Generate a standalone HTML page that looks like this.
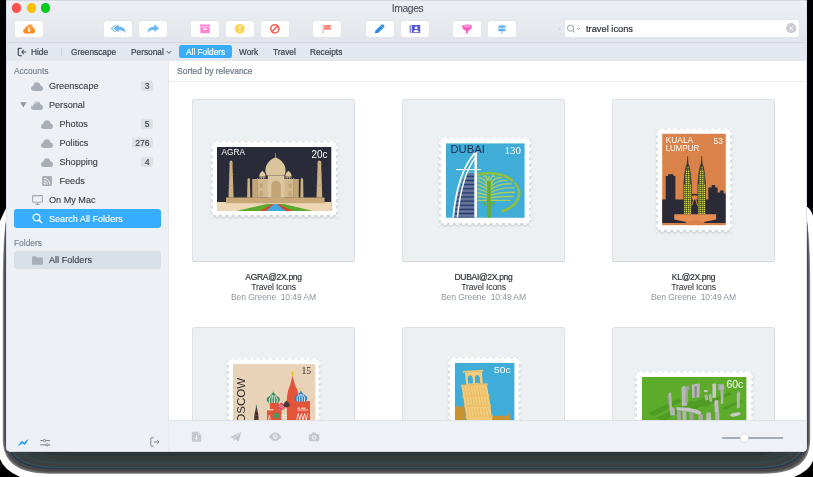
<!DOCTYPE html>
<html>
<head>
<meta charset="utf-8">
<title>Images</title>
<style>
*{box-sizing:border-box;margin:0;padding:0}
html,body{width:813px;height:477px;overflow:hidden;background:#fff}
body{font-family:"Liberation Sans",sans-serif;font-size:9.5px;color:#3f464f;position:relative}
.abs{position:absolute}
#bgsvg{position:absolute;left:0;top:0;width:813px;height:477px}
#win{position:absolute;left:6px;top:0;width:801px;height:452px;background:#fff;border-radius:1.5px 1.5px 5px 5px;overflow:hidden}
#titlebar{position:absolute;left:0;top:0;width:801px;height:43px;background:linear-gradient(#eceff3,#e2e6ec);border-bottom:1px solid #d3d8e0}
#title{position:absolute;left:.8px;width:801px;top:2.6px;height:12px;line-height:12px;text-align:center;font-size:10.3px;letter-spacing:-.35px;color:#4a4f5a;-webkit-text-stroke:.1px #4a4f5a}
.tl{position:absolute;top:3.4px;width:9.2px;height:9.2px;border-radius:50%}
.tb{position:absolute;top:20.6px;width:28.1px;height:16.2px;background:#fff;border-radius:3px;box-shadow:0 0 0 .5px #e1e5ea}
.tb svg{position:absolute;left:0;top:.2px;width:28.1px;height:15.8px}
#search{position:absolute;left:558.5px;top:20.4px;width:234px;height:16.2px;background:#fff;border-radius:3px;box-shadow:0 0 0 .5px #e1e5ea}
#tabbar{position:absolute;left:0;top:42.5px;width:801px;height:18.5px;background:#e3e8ef}
.tab{position:absolute;top:.5px;height:18px;line-height:18px;font-size:8.3px;color:#3c424b;white-space:nowrap;-webkit-text-stroke:.2px currentColor}
#sidebar{position:absolute;left:0;top:61px;width:163px;height:391px;background:#edf0f4;border-right:1px solid #e5e8ed}
#content{position:absolute;left:163px;top:61px;width:638px;height:391px;background:#fff}
.sh{position:absolute;left:8px;font-size:8.4px;color:#7a8592;-webkit-text-stroke:.15px #7a8592}
.row{position:absolute;left:8px;width:147.3px;height:18px;line-height:18px;font-size:9.1px;color:#3a4048;border-radius:3px;-webkit-text-stroke:.12px currentColor}
.row span.t{position:absolute;top:0}
.badge{position:absolute;right:8.3px;top:4.2px;height:10.2px;line-height:10.4px;padding:0 3.4px;background:#dde2e9;border-radius:2px;font-size:8.6px;color:#3f464f;min-width:11.6px;text-align:center;-webkit-text-stroke:.15px currentColor}
.thumb{position:absolute;width:163px;height:163px;background:#ecf0f3;border:1px solid #dde1e7;border-bottom-color:#d3d7dd;border-radius:2.5px}
.cap{position:absolute;width:163px;text-align:center;white-space:nowrap}
.cap div{height:9.85px;line-height:9.85px}
.cap .n{font-size:8.5px;letter-spacing:-.3px;color:#2e3238;-webkit-text-stroke:.2px #2e3238}
.cap .m{font-size:8.6px;letter-spacing:-.15px;color:#3c4148;-webkit-text-stroke:.1px #3c4148}
.cap .g{font-size:8.6px;letter-spacing:-.12px;color:#8f97a1}
#bottombar{position:absolute;left:0;top:359.3px;width:638px;height:32px;background:#eef1f5;border-top:1px solid #dfe4ea}
.tab,.row,.sh,.cap,#title,.hdr,.stxt,#content>svg{will-change:transform}
</style>
</head>
<body>
<svg id="bgsvg" viewBox="0 0 813 477">
  <defs>
    <linearGradient id="shg" x1="0" y1="0" x2="0" y2="1">
      <stop offset="0" stop-color="#2f383b"/>
      <stop offset="0.45" stop-color="#3d4446"/>
      <stop offset="0.75" stop-color="#474a4c"/>
      <stop offset="0.9" stop-color="#5a5c5d"/>
      <stop offset="1" stop-color="#8a8a8a"/>
    </linearGradient>
  </defs>
  <!-- black outer areas -->
  <path d="M0 0H9V4H7V206L0 221Z" fill="#000"/>
  <path d="M813 0H804V4H806V206Q811 209 813 216Z" fill="#000"/>
  <path d="M0 459Q4 470 20 477H0Z" fill="#000"/>
  <path d="M813 461Q809 471 794 477H813Z" fill="#000"/>
  <!--SH0-->
  <path d="M6.5 217Q2.80 240 2.80 285V440.0C3.20 456.0 10.0 473.8 50.0 473.8H763.0C803.0 473.8 809.80 456.0 810.20 440.0V285Q810.20 240 806.5 217Z" fill="#909090"/>
  <path d="M6.5 217Q3.34 240 3.34 285V439.7C3.74 455.4 10.4 473.2 50.7 473.2H762.3C802.6 473.2 809.26 455.4 809.66 439.7V285Q809.66 240 806.5 217Z" fill="#6e6e6e"/>
  <path d="M6.5 217Q4.06 240 4.06 285V439.3C4.46 454.6 10.8 472.4 51.7 472.4H761.3C802.2 472.4 808.54 454.6 808.94 439.3V285Q808.94 240 806.5 217Z" fill="#585858"/>
  <path d="M6.5 217Q4.87 240 4.87 285V438.9C5.27 453.7 11.4 471.5 52.8 471.5H760.2C801.6 471.5 807.73 453.7 808.13 438.9V285Q808.13 240 806.5 217Z" fill="#484848"/>
  <path d="M6.5 217Q6.85 240 6.85 285V437.8C7.25 451.5 12.7 469.3 55.4 469.3H757.6C800.3 469.3 805.75 451.5 806.15 437.8V285Q806.15 240 806.5 217Z" fill="#2d3550"/>
  <path d="M6.5 217Q7.93 240 7.93 285V437.1C8.33 450.3 13.4 468.1 56.8 468.1H756.2C799.6 468.1 804.67 450.3 805.07 437.1V285Q805.07 240 806.5 217Z" fill="#315457"/>
  <path d="M6.5 217Q9.01 240 9.01 285V436.6C9.41 449.1 14.1 466.9 58.3 466.9H754.7C798.9 466.9 803.59 449.1 803.99 436.6V285Q803.99 240 806.5 217Z" fill="#3c3e40"/>
  <path d="M6.5 217Q12.07 240 12.07 285V434.9C12.47 445.7 16.2 463.5 62.4 463.5H750.6C796.8 463.5 800.53 445.7 800.93 434.9V285Q800.93 240 806.5 217Z" fill="#2f4a4c"/>
  <path d="M6.5 217Q13.15 240 13.15 285V434.2C13.55 444.5 16.9 462.3 63.8 462.3H749.2C796.1 462.3 799.45 444.5 799.85 434.2V285Q799.85 240 806.5 217Z" fill="#3a3f41"/>
  <path d="M6.5 217Q14.05 240 14.05 285V433.8C14.45 443.5 17.5 461.3 65.0 461.3H748.0C795.5 461.3 798.55 443.5 798.95 433.8V285Q798.95 240 806.5 217Z" fill="#33403f"/>
  <path d="M6.5 217Q16.12 240 16.12 285V432.6C16.52 441.2 18.9 459.0 67.8 459.0H745.2C794.1 459.0 796.48 441.2 796.88 432.6V285Q796.88 240 806.5 217Z" fill="#363c3e"/>
  <path d="M6.5 217Q18.82 240 18.82 285V431.1C19.22 438.2 20.7 456.0 71.4 456.0H741.6C792.3 456.0 793.78 438.2 794.18 431.1V285Q794.18 240 806.5 217Z" fill="#2e3538"/>
  <!--SH1-->
</svg>
<div id="win">
  <div id="titlebar">
    <div class="tl" style="left:6.2px;background:#ff4f4f"></div>
    <div class="tl" style="left:20.7px;background:#ffbc00"></div>
    <div class="tl" style="left:35.3px;background:#00cc1e"></div>
    <div id="title">Images</div>
    <div class="tb" style="left:8.7px"><svg viewBox="0 0 28.1 15.8"><defs><linearGradient id="og" x1="0" y1="0" x2="0" y2="1"><stop offset="0" stop-color="#ffa347"/><stop offset="1" stop-color="#ff8410"/></linearGradient></defs><path d="M10.6 12.6Q8.1 12.6 8.1 10.1Q8.1 8 10 7.6Q10 5.2 12.2 5.2Q12.8 3.2 15 3.2Q17.6 3.2 17.9 6.4Q20.1 6.8 20.1 9.6Q20.1 12.6 17.4 12.6Z" fill="url(#og)"/><path d="M13.4 6.6H14.8V9.2H16L14.1 11.3L12.2 9.2H13.4Z" fill="#fff"/></svg></div>
    <div class="tb" style="left:97.8px"><svg viewBox="0 0 28.1 15.8"><path d="M11.6 3.4L6.5 7.4L11.6 11.4V10.2L8.1 7.4L11.6 4.7Z" fill="#7cc0f7"/><path d="M14.6 3.3L9.4 7.4L14.6 11.5V9.2Q19.4 8.8 21.8 12.2Q21.3 5.9 14.6 5.6Z" fill="#6db7f5"/></svg></div>
    <div class="tb" style="left:132.6px"><svg viewBox="0 0 28.1 15.8"><path d="M15.4 3.3L20 7.3L15.4 11.3V9Q10.6 8.8 8.2 12.2Q8.7 5.9 15.4 5.6Z" fill="#6db7f5"/></svg></div>
    <div class="tb" style="left:185.2px"><svg viewBox="0 0 28.1 15.8"><rect x="8.8" y="3.4" width="10.4" height="2.2" rx="0.3" fill="#ff7fd2"/><path d="M9.4 6.2H18.6V11.6Q18.6 12.2 18 12.2H10Q9.4 12.2 9.4 11.6Z" fill="#ff7fd2"/><rect x="12.3" y="7.6" width="3.4" height="1.3" rx="0.5" fill="#fff"/></svg></div>
    <div class="tb" style="left:220.1px"><svg viewBox="0 0 28.1 15.8"><circle cx="13.8" cy="7.8" r="4.9" fill="#ffd451"/><rect x="13.15" y="4.8" width="1.3" height="3.8" rx="0.4" fill="#fff"/><circle cx="13.8" cy="10.2" r="0.8" fill="#fff"/></svg></div>
    <div class="tb" style="left:255px"><svg viewBox="0 0 28.1 15.8"><circle cx="13.8" cy="7.8" r="4.1" fill="none" stroke="#ff5b4c" stroke-width="1.5"/><path d="M16.6 5L11 10.6" stroke="#ff5b4c" stroke-width="1.5"/></svg></div>
    <div class="tb" style="left:307px"><svg viewBox="0 0 28.1 15.8"><rect x="9.7" y="3.5" width="0.9" height="9" fill="#ff9488"/><path d="M11.2 3.9H18.6L17 6.3L18.6 8.7H11.2Z" fill="#ff8577"/></svg></div>
    <div class="tb" style="left:360px"><svg viewBox="0 0 28.1 15.8"><path d="M8.8 12.3L9.5 9.5L15.6 3.6Q16.4 2.9 17.3 3.7L18.1 4.5Q18.9 5.4 18.1 6.2L12 12Z" fill="#2a8de8"/><path d="M14.9 4.6L17.1 6.8" stroke="#fff" stroke-width="0.5"/></svg></div>
    <div class="tb" style="left:394.6px"><svg viewBox="0 0 28.1 15.8"><rect x="8.5" y="4" width="1.9" height="8" fill="#8f92ee"/><rect x="11" y="4" width="8.2" height="8" rx="0.4" fill="#5458dc"/><circle cx="15.1" cy="6.9" r="1.4" fill="#fff"/><path d="M12.5 11.2Q12.5 8.9 15.1 8.9Q17.7 8.9 17.7 11.2Z" fill="#fff"/></svg></div>
    <div class="tb" style="left:446.8px"><svg viewBox="0 0 28.1 15.8"><path d="M9.2 5.4Q9.2 3.5 14 3.5Q18.8 3.5 18.8 5.4Q18.8 8.2 15.1 9.7L14.9 12L14 13L13.1 12L12.9 9.7Q9.2 8.2 9.2 5.4Z" fill="#ff5cc2"/><ellipse cx="14" cy="5.2" rx="3.5" ry="1" fill="#ffa8de"/></svg></div>
    <div class="tb" style="left:481.9px"><svg viewBox="0 0 28.1 15.8"><rect x="13.45" y="3.5" width="0.9" height="9.3" fill="#5fb4f5"/><path d="M10.4 4.4H17L18.1 5.6L17 6.8H10.4Z" fill="#5fb4f5"/><path d="M17.4 7.8H10.8L9.7 9L10.8 10.2H17.4Z" fill="#5fb4f5"/></svg></div>
    <div id="search">
      <svg class="abs" style="left:2.5px;top:3.4px" width="17" height="10" viewBox="0 0 17 10"><circle cx="3.5" cy="4.2" r="3.05" fill="none" stroke="#979da6" stroke-width="0.95"/><path d="M5.7 6.5L7.6 8.5" stroke="#979da6" stroke-width="1.05"/><path d="M10 3.9L11.5 5.4L13 3.9" fill="none" stroke="#7b828c" stroke-width="0.85"/></svg>
      <div class="stxt abs" style="left:21px;top:2.5px;font-size:9.3px;line-height:12px;color:#2b2f36;-webkit-text-stroke:.2px #2b2f36;white-space:nowrap">travel icons</div>
      <svg class="abs" style="left:221.3px;top:2.9px" width="10.4" height="10.4" viewBox="0 0 10 10"><circle cx="5" cy="5" r="4.9" fill="#cacdd1"/><path d="M3.2 3.2L6.8 6.8M6.8 3.2L3.2 6.8" stroke="#fff" stroke-width="0.85"/></svg>
    </div>
    <div class="abs" style="left:552.6px;top:27.8px;width:2px;height:2px;border-radius:50%;background:#cfd4db"></div>
  </div>
  <div id="tabbar">
    <svg class="abs" style="left:11px;top:4px" width="10" height="10" viewBox="0 0 10 10"><path d="M4.7 1.3H2.4Q1.3 1.3 1.3 2.4V7.6Q1.3 8.7 2.4 8.7H4.7" fill="none" stroke="#4d5561" stroke-width="1.3"/><path d="M9.3 5H4.9" fill="none" stroke="#4d5561" stroke-width="1.1"/><path d="M6.9 2.9L4.8 5L6.9 7.1" fill="none" stroke="#4d5561" stroke-width="1.1"/></svg>
    <div class="tab" style="left:24.7px">Hide</div>
    <div class="abs" style="left:55px;top:5.5px;width:1px;height:8px;background:#cdd3db"></div>
    <div class="tab" style="left:65.3px">Greenscape</div>
    <div class="tab" style="left:124.6px">Personal</div>
    <svg class="abs" style="left:160px;top:7px" width="6" height="5" viewBox="0 0 6 5"><path d="M0.8 1L3 3.4L5.2 1" fill="none" stroke="#555c66" stroke-width="1"/></svg>
    <div class="abs" style="left:173.2px;top:2.3px;width:52.6px;height:13px;border-radius:2.5px;background:#38acff"></div>
    <div class="tab" style="left:179.8px;color:#fff">All Folders</div>
    <div class="tab" style="left:233.2px">Work</div>
    <div class="tab" style="left:267.2px">Travel</div>
    <div class="tab" style="left:304px">Receipts</div>
  </div>
  <div id="sidebar">
    <div class="sh" style="top:5px">Accounts</div>
    <div class="row" style="top:16.3px;"><svg class="abs" style="left:17px;top:4.6px" width="12" height="9" viewBox="0 0 12 9"><path d="M3 9Q0 9 0 6.3Q0 4 2.3 3.7Q2.6 0.2 6 0.2Q8.8 0.2 9.4 3.2Q12 3.6 12 6.2Q12 9 9.2 9Z" fill="#a9afb9"/></svg><span class="t" style="left:35px">Greenscape</span><span class="badge">3</span></div>
    <div class="row" style="top:35.1px;"><svg class="abs" style="left:6px;top:6.3px" width="7" height="6" viewBox="0 0 7 6"><path d="M0.3 0.3H6.5L3.4 5.6Z" fill="#8f969f"/></svg><svg class="abs" style="left:17px;top:4.6px" width="12" height="9" viewBox="0 0 12 9"><path d="M3 9Q0 9 0 6.3Q0 4 2.3 3.7Q2.6 0.2 6 0.2Q8.8 0.2 9.4 3.2Q12 3.6 12 6.2Q12 9 9.2 9Z" fill="#a9afb9"/><path d="M1.2 5.6Q2.2 1.6 7.4 0.9" fill="none" stroke="#eef1f5" stroke-width="0.9"/></svg><span class="t" style="left:35px">Personal</span></div>
    <div class="row" style="top:54px;"><svg class="abs" style="left:27.3px;top:4.6px" width="12" height="9" viewBox="0 0 12 9"><path d="M3 9Q0 9 0 6.3Q0 4 2.3 3.7Q2.6 0.2 6 0.2Q8.8 0.2 9.4 3.2Q12 3.6 12 6.2Q12 9 9.2 9Z" fill="#a9afb9"/></svg><span class="t" style="left:45.5px">Photos</span><span class="badge">5</span></div>
    <div class="row" style="top:72.8px;"><svg class="abs" style="left:27.3px;top:4.6px" width="12" height="9" viewBox="0 0 12 9"><path d="M3 9Q0 9 0 6.3Q0 4 2.3 3.7Q2.6 0.2 6 0.2Q8.8 0.2 9.4 3.2Q12 3.6 12 6.2Q12 9 9.2 9Z" fill="#a9afb9"/></svg><span class="t" style="left:45.5px">Politics</span><span class="badge">276</span></div>
    <div class="row" style="top:91.7px;"><svg class="abs" style="left:27.3px;top:4.6px" width="12" height="9" viewBox="0 0 12 9"><path d="M3 9Q0 9 0 6.3Q0 4 2.3 3.7Q2.6 0.2 6 0.2Q8.8 0.2 9.4 3.2Q12 3.6 12 6.2Q12 9 9.2 9Z" fill="#a9afb9"/></svg><span class="t" style="left:45.5px">Shopping</span><span class="badge">4</span></div>
    <div class="row" style="top:110.6px;"><svg class="abs" style="left:28px;top:4px" width="10" height="10" viewBox="0 0 9 9"><rect width="9" height="9" rx="1.2" fill="#a9afb9"/><circle cx="2.4" cy="6.7" r="0.9" fill="#eef1f5"/><path d="M1.6 4.2A3.3 3.3 0 0 1 4.9 7.5M1.6 2A5.5 5.5 0 0 1 7.1 7.5" fill="none" stroke="#eef1f5" stroke-width="0.9"/></svg><span class="t" style="left:45.5px">Feeds</span></div>
    <div class="row" style="top:129.5px;"><svg class="abs" style="left:17.5px;top:4px" width="11" height="10" viewBox="0 0 11 10"><rect x="0.6" y="0.6" width="9.8" height="6.6" rx="0.8" fill="none" stroke="#a2a9b3" stroke-width="1.1"/><path d="M3.3 9.4H7.7M5.5 7.3V9.2" stroke="#a2a9b3" stroke-width="1.1"/></svg><span class="t" style="left:35px">On My Mac</span></div>
    <div class="row" style="top:148.4px;background:#38acff;color:#fff;height:19px;line-height:20.2px;top:148px"><svg class="abs" style="left:17.5px;top:4px" width="11" height="11" viewBox="0 0 11 11"><circle cx="4.5" cy="4.5" r="3.4" fill="none" stroke="#fff" stroke-width="1.3"/><path d="M7 7L9.8 9.8" stroke="#fff" stroke-width="1.4" stroke-linecap="round"/></svg><span class="t" style="left:35px">Search All Folders</span></div>
    <div class="sh" style="top:176.5px">Folders</div>
    <div class="row" style="top:190px;background:#d9dfe8"><svg class="abs" style="left:17.5px;top:4.8px" width="11" height="9" viewBox="0 0 11 9"><path d="M0 1Q0 0.2 0.8 0.2H3.6L4.8 1.4H10.2Q11 1.4 11 2.2V8Q11 8.8 10.2 8.8H0.8Q0 8.8 0 8Z" fill="#a9afb9"/></svg><span class="t" style="left:35px">All Folders</span></div>
    <svg class="abs" style="left:12.4px;top:377.6px" width="11" height="8" viewBox="0 0 11 8"><path d="M0.6 6.3L3.9 2.3L6.2 4L9.6 0.9L6.8 5.6L4.5 3.9Z" fill="#2f9fff" stroke="#2f9fff" stroke-width="1" stroke-linejoin="round"/></svg>
    <svg class="abs" style="left:33.9px;top:376.7px" width="11" height="9" viewBox="0 0 11 9"><path d="M0.3 2.6H10.1M0.3 6.9H10.1" stroke="#747c86" stroke-width="0.9"/><circle cx="4.4" cy="2.6" r="1.2" fill="#eef1f5" stroke="#747c86" stroke-width="0.8"/><circle cx="7" cy="6.9" r="1.2" fill="#eef1f5" stroke="#747c86" stroke-width="0.8"/></svg>
    <svg class="abs" style="left:143.5px;top:376.2px" width="10" height="10" viewBox="0 0 10 10"><path d="M3.6 0.8H1.8Q0.8 0.8 0.8 1.8V8.2Q0.8 9.2 1.8 9.2H3.6" fill="none" stroke="#7d858f" stroke-width="1"/><path d="M3.8 5H9M7.2 3.2L9 5L7.2 6.8" fill="none" stroke="#7d858f" stroke-width="1"/></svg>
  </div>
  <div id="content">
    <div class="hdr abs" style="left:7.8px;top:5px;font-size:8.5px;color:#6a7787;-webkit-text-stroke:.2px #6a7787;white-space:nowrap">Sorted by relevance</div>
    <div class="abs" style="left:0;top:19.5px;width:638px;height:1px;background:#e9ecf0"></div>
    <div class="thumb" style="left:23.3px;top:38px"></div>
    <div class="thumb" style="left:232.8px;top:38px"></div>
    <div class="thumb" style="left:442.8px;top:38px"></div>
    <div class="thumb" style="left:23.3px;top:266.3px"></div>
    <div class="thumb" style="left:232.8px;top:266.3px"></div>
    <div class="thumb" style="left:442.8px;top:266.3px"></div>
    <div class="cap" style="left:23.3px;top:211.7px"><div class="n">AGRA@2X.png</div><div class="m">Travel Icons</div><div class="g">Ben Greene&nbsp;&nbsp;10:49 AM</div></div>
    <div class="cap" style="left:232.8px;top:211.7px"><div class="n">DUBAI@2X.png</div><div class="m">Travel Icons</div><div class="g">Ben Greene&nbsp;&nbsp;10:49 AM</div></div>
    <div class="cap" style="left:442.8px;top:211.7px"><div class="n">KL@2X.png</div><div class="m">Travel Icons</div><div class="g">Ben Greene&nbsp;&nbsp;10:49 AM</div></div>
    <!--ST0-->
    <svg class="abs" width="0" height="0"><defs><filter id="bl" x="-10%" y="-10%" width="120%" height="130%"><feGaussianBlur stdDeviation="1.2"/></filter></defs></svg>
    <svg class="abs" style="left:38.5px;top:77.4px" width="132.8" height="83.8" viewBox="207.5 138.4 132.8 83.8"><path d="M210.50 142.90H211.57A2.1 2.1 0 0 0 215.77 142.90H217.91A2.1 2.1 0 0 0 222.11 142.90H224.25A2.1 2.1 0 0 0 228.45 142.90H230.59A2.1 2.1 0 0 0 234.79 142.90H236.93A2.1 2.1 0 0 0 241.13 142.90H243.27A2.1 2.1 0 0 0 247.47 142.90H249.61A2.1 2.1 0 0 0 253.81 142.90H255.95A2.1 2.1 0 0 0 260.15 142.90H262.29A2.1 2.1 0 0 0 266.49 142.90H268.63A2.1 2.1 0 0 0 272.83 142.90H274.97A2.1 2.1 0 0 0 279.17 142.90H281.31A2.1 2.1 0 0 0 285.51 142.90H287.65A2.1 2.1 0 0 0 291.85 142.90H293.99A2.1 2.1 0 0 0 298.19 142.90H300.33A2.1 2.1 0 0 0 304.53 142.90H306.67A2.1 2.1 0 0 0 310.87 142.90H313.01A2.1 2.1 0 0 0 317.21 142.90H319.35A2.1 2.1 0 0 0 323.55 142.90H325.69A2.1 2.1 0 0 0 329.89 142.90H332.03A2.1 2.1 0 0 0 336.23 142.90H337.30V143.96A2.1 2.1 0 0 0 337.30 148.16V150.28A2.1 2.1 0 0 0 337.30 154.47V156.59A2.1 2.1 0 0 0 337.30 160.79V162.91A2.1 2.1 0 0 0 337.30 167.11V169.22A2.1 2.1 0 0 0 337.30 173.42V175.54A2.1 2.1 0 0 0 337.30 179.74V181.86A2.1 2.1 0 0 0 337.30 186.06V188.18A2.1 2.1 0 0 0 337.30 192.38V194.49A2.1 2.1 0 0 0 337.30 198.69V200.81A2.1 2.1 0 0 0 337.30 205.01V207.12A2.1 2.1 0 0 0 337.30 211.32V213.44A2.1 2.1 0 0 0 337.30 217.64V218.70H336.23A2.1 2.1 0 0 0 332.03 218.70H329.89A2.1 2.1 0 0 0 325.69 218.70H323.55A2.1 2.1 0 0 0 319.35 218.70H317.21A2.1 2.1 0 0 0 313.01 218.70H310.87A2.1 2.1 0 0 0 306.67 218.70H304.53A2.1 2.1 0 0 0 300.33 218.70H298.19A2.1 2.1 0 0 0 293.99 218.70H291.85A2.1 2.1 0 0 0 287.65 218.70H285.51A2.1 2.1 0 0 0 281.31 218.70H279.17A2.1 2.1 0 0 0 274.97 218.70H272.83A2.1 2.1 0 0 0 268.63 218.70H266.49A2.1 2.1 0 0 0 262.29 218.70H260.15A2.1 2.1 0 0 0 255.95 218.70H253.81A2.1 2.1 0 0 0 249.61 218.70H247.47A2.1 2.1 0 0 0 243.27 218.70H241.13A2.1 2.1 0 0 0 236.93 218.70H234.79A2.1 2.1 0 0 0 230.59 218.70H228.45A2.1 2.1 0 0 0 224.25 218.70H222.11A2.1 2.1 0 0 0 217.91 218.70H215.77A2.1 2.1 0 0 0 211.57 218.70H210.50V217.64A2.1 2.1 0 0 0 210.50 213.44V211.32A2.1 2.1 0 0 0 210.50 207.12V205.01A2.1 2.1 0 0 0 210.50 200.81V198.69A2.1 2.1 0 0 0 210.50 194.49V192.38A2.1 2.1 0 0 0 210.50 188.18V186.06A2.1 2.1 0 0 0 210.50 181.86V179.74A2.1 2.1 0 0 0 210.50 175.54V173.42A2.1 2.1 0 0 0 210.50 169.22V167.11A2.1 2.1 0 0 0 210.50 162.91V160.79A2.1 2.1 0 0 0 210.50 156.59V154.47A2.1 2.1 0 0 0 210.50 150.28V148.16A2.1 2.1 0 0 0 210.50 143.96Z" fill="#bfc5cd" opacity="0.85" filter="url(#bl)"/><path d="M210.50 141.40H211.57A2.1 2.1 0 0 0 215.77 141.40H217.91A2.1 2.1 0 0 0 222.11 141.40H224.25A2.1 2.1 0 0 0 228.45 141.40H230.59A2.1 2.1 0 0 0 234.79 141.40H236.93A2.1 2.1 0 0 0 241.13 141.40H243.27A2.1 2.1 0 0 0 247.47 141.40H249.61A2.1 2.1 0 0 0 253.81 141.40H255.95A2.1 2.1 0 0 0 260.15 141.40H262.29A2.1 2.1 0 0 0 266.49 141.40H268.63A2.1 2.1 0 0 0 272.83 141.40H274.97A2.1 2.1 0 0 0 279.17 141.40H281.31A2.1 2.1 0 0 0 285.51 141.40H287.65A2.1 2.1 0 0 0 291.85 141.40H293.99A2.1 2.1 0 0 0 298.19 141.40H300.33A2.1 2.1 0 0 0 304.53 141.40H306.67A2.1 2.1 0 0 0 310.87 141.40H313.01A2.1 2.1 0 0 0 317.21 141.40H319.35A2.1 2.1 0 0 0 323.55 141.40H325.69A2.1 2.1 0 0 0 329.89 141.40H332.03A2.1 2.1 0 0 0 336.23 141.40H337.30V142.46A2.1 2.1 0 0 0 337.30 146.66V148.78A2.1 2.1 0 0 0 337.30 152.97V155.09A2.1 2.1 0 0 0 337.30 159.29V161.41A2.1 2.1 0 0 0 337.30 165.61V167.72A2.1 2.1 0 0 0 337.30 171.92V174.04A2.1 2.1 0 0 0 337.30 178.24V180.36A2.1 2.1 0 0 0 337.30 184.56V186.68A2.1 2.1 0 0 0 337.30 190.88V192.99A2.1 2.1 0 0 0 337.30 197.19V199.31A2.1 2.1 0 0 0 337.30 203.51V205.62A2.1 2.1 0 0 0 337.30 209.82V211.94A2.1 2.1 0 0 0 337.30 216.14V217.20H336.23A2.1 2.1 0 0 0 332.03 217.20H329.89A2.1 2.1 0 0 0 325.69 217.20H323.55A2.1 2.1 0 0 0 319.35 217.20H317.21A2.1 2.1 0 0 0 313.01 217.20H310.87A2.1 2.1 0 0 0 306.67 217.20H304.53A2.1 2.1 0 0 0 300.33 217.20H298.19A2.1 2.1 0 0 0 293.99 217.20H291.85A2.1 2.1 0 0 0 287.65 217.20H285.51A2.1 2.1 0 0 0 281.31 217.20H279.17A2.1 2.1 0 0 0 274.97 217.20H272.83A2.1 2.1 0 0 0 268.63 217.20H266.49A2.1 2.1 0 0 0 262.29 217.20H260.15A2.1 2.1 0 0 0 255.95 217.20H253.81A2.1 2.1 0 0 0 249.61 217.20H247.47A2.1 2.1 0 0 0 243.27 217.20H241.13A2.1 2.1 0 0 0 236.93 217.20H234.79A2.1 2.1 0 0 0 230.59 217.20H228.45A2.1 2.1 0 0 0 224.25 217.20H222.11A2.1 2.1 0 0 0 217.91 217.20H215.77A2.1 2.1 0 0 0 211.57 217.20H210.50V216.14A2.1 2.1 0 0 0 210.50 211.94V209.82A2.1 2.1 0 0 0 210.50 205.62V203.51A2.1 2.1 0 0 0 210.50 199.31V197.19A2.1 2.1 0 0 0 210.50 192.99V190.88A2.1 2.1 0 0 0 210.50 186.68V184.56A2.1 2.1 0 0 0 210.50 180.36V178.24A2.1 2.1 0 0 0 210.50 174.04V171.92A2.1 2.1 0 0 0 210.50 167.72V165.61A2.1 2.1 0 0 0 210.50 161.41V159.29A2.1 2.1 0 0 0 210.50 155.09V152.97A2.1 2.1 0 0 0 210.50 148.78V146.66A2.1 2.1 0 0 0 210.50 142.46Z" fill="#fff"/><svg x="216.5" y="147.4" width="114.3" height="64.0" viewBox="0 0 114.3 64.0"><rect width="115" height="65" fill="#2a2b38"/><rect y="55" width="115" height="10" fill="#ecd6b4"/><path d="M19.3 64L50 57H67L96 64Z" fill="#5cab2f"/><path d="M42.7 64L55.5 57H61.5L76 64Z" fill="#d44a2a"/><path d="M49 64L57 57H60L68.5 64Z" fill="#3fa9e0"/><rect x="9" y="50.5" width="98.6" height="5.7" fill="#c9a877"/><path d="M12.7 14.5Q14 12.4 15.4 14.5L16.6 50.5H11.5Z" fill="#cdb083"/><path d="M100.7 14.5Q102.4 12.4 104.1 14.5L105.3 50.5H99.5Z" fill="#cdb083"/><rect x="11.9" y="16.5" width="4.3" height="0.8" fill="#b89a6c"/><rect x="99.9" y="16.5" width="5" height="0.8" fill="#b89a6c"/><rect x="11.7" y="27" width="4.7" height="0.8" fill="#b89a6c"/><rect x="99.7" y="27" width="5.4" height="0.8" fill="#b89a6c"/><rect x="11.5" y="38" width="5.1" height="0.8" fill="#b89a6c"/><rect x="99.5" y="38" width="5.8" height="0.8" fill="#b89a6c"/><path d="M30.5 32Q31.7 29.8 32.9 32L33.3 50.5H30.1Z" fill="#cdb083"/><path d="M83.7 32Q84.9 29.8 86.1 32L86.5 50.5H83.3Z" fill="#cdb083"/><rect x="35.5" y="32" width="46" height="18.5" fill="#d2b88e"/><rect x="35.5" y="32" width="4.5" height="18.5" fill="#c4a676"/><rect x="77" y="32" width="4.5" height="18.5" fill="#c4a676"/><rect x="40" y="31" width="0.9" height="19.5" fill="#b89a6c"/><rect x="76.1" y="31" width="0.9" height="19.5" fill="#b89a6c"/><rect x="50.8" y="28.6" width="16.6" height="21.9" fill="#dcc7a0"/><path d="M54.3 50.5V38.5Q54.3 34.6 59.1 33.6Q63.9 34.6 63.9 38.5V50.5Z" fill="#c4a676"/><path d="M42.6 41V37.8Q42.6 36.5 44.2 36.2Q45.8 36.5 45.8 37.8V41ZM42.6 49.5V45.3Q42.6 44 44.2 43.7Q45.8 44 45.8 45.3V49.5ZM71.4 41V37.8Q71.4 36.5 73 36.2Q74.6 36.5 74.6 37.8V41ZM71.4 49.5V45.3Q71.4 44 73 43.7Q74.6 44 74.6 45.3V49.5Z" fill="#c4a676"/><path d="M49.8 28.6Q47.2 24 49.4 18.5Q52.2 12.6 58.5 10.2Q64.8 12.6 67.6 18.5Q69.8 24 67.2 28.6Z" fill="#d9c49c"/><rect x="58.1" y="6.3" width="0.8" height="4.4" fill="#b89a6c"/><path d="M42.4 29.4Q41.8 26.6 45.4 23.8Q49 26.6 48.4 29.4Z" fill="#dcc7a0"/><path d="M68.4 29.4Q67.8 26.6 71.4 23.8Q75 26.6 74.4 29.4Z" fill="#dcc7a0"/><rect x="42.4" y="29.4" width="6" height="2.6" fill="#c4a676"/><rect x="68.4" y="29.4" width="6" height="2.6" fill="#c4a676"/><path d="M43.2 32V30.4H44.2V32ZM45 32V30.4H46V32ZM46.8 32V30.4H47.8V32ZM69.2 32V30.4H70.2V32ZM71 32V30.4H72V32ZM72.8 32V30.4H73.8V32Z" fill="#2a2b38"/><text x="4.6" y="8" font-family="Liberation Sans, sans-serif" font-size="8.4" fill="#fff" textLength="23.3" lengthAdjust="spacingAndGlyphs">AGRA</text><text x="94.6" y="10.6" font-family="Liberation Sans, sans-serif" font-size="10" fill="#fff" textLength="16" lengthAdjust="spacingAndGlyphs">20c</text></svg></svg>
    <svg class="abs" style="left:266.5px;top:72.5px" width="98.1" height="96.0" viewBox="435.5 133.5 98.1 96.0"><path d="M438.50 138.00H439.47A2.1 2.1 0 0 0 443.67 138.00H445.61A2.1 2.1 0 0 0 449.81 138.00H451.75A2.1 2.1 0 0 0 455.95 138.00H457.89A2.1 2.1 0 0 0 462.09 138.00H464.03A2.1 2.1 0 0 0 468.23 138.00H470.17A2.1 2.1 0 0 0 474.37 138.00H476.31A2.1 2.1 0 0 0 480.51 138.00H482.45A2.1 2.1 0 0 0 486.65 138.00H488.59A2.1 2.1 0 0 0 492.79 138.00H494.73A2.1 2.1 0 0 0 498.93 138.00H500.87A2.1 2.1 0 0 0 505.07 138.00H507.01A2.1 2.1 0 0 0 511.21 138.00H513.15A2.1 2.1 0 0 0 517.35 138.00H519.29A2.1 2.1 0 0 0 523.49 138.00H525.43A2.1 2.1 0 0 0 529.63 138.00H530.60V139.04A2.1 2.1 0 0 0 530.60 143.24V145.33A2.1 2.1 0 0 0 530.60 149.53V151.61A2.1 2.1 0 0 0 530.60 155.81V157.90A2.1 2.1 0 0 0 530.60 162.10V164.19A2.1 2.1 0 0 0 530.60 168.39V170.47A2.1 2.1 0 0 0 530.60 174.67V176.76A2.1 2.1 0 0 0 530.60 180.96V183.04A2.1 2.1 0 0 0 530.60 187.24V189.33A2.1 2.1 0 0 0 530.60 193.53V195.61A2.1 2.1 0 0 0 530.60 199.81V201.90A2.1 2.1 0 0 0 530.60 206.10V208.19A2.1 2.1 0 0 0 530.60 212.39V214.47A2.1 2.1 0 0 0 530.60 218.67V220.76A2.1 2.1 0 0 0 530.60 224.96V226.00H529.63A2.1 2.1 0 0 0 525.43 226.00H523.49A2.1 2.1 0 0 0 519.29 226.00H517.35A2.1 2.1 0 0 0 513.15 226.00H511.21A2.1 2.1 0 0 0 507.01 226.00H505.07A2.1 2.1 0 0 0 500.87 226.00H498.93A2.1 2.1 0 0 0 494.73 226.00H492.79A2.1 2.1 0 0 0 488.59 226.00H486.65A2.1 2.1 0 0 0 482.45 226.00H480.51A2.1 2.1 0 0 0 476.31 226.00H474.37A2.1 2.1 0 0 0 470.17 226.00H468.23A2.1 2.1 0 0 0 464.03 226.00H462.09A2.1 2.1 0 0 0 457.89 226.00H455.95A2.1 2.1 0 0 0 451.75 226.00H449.81A2.1 2.1 0 0 0 445.61 226.00H443.67A2.1 2.1 0 0 0 439.47 226.00H438.50V224.96A2.1 2.1 0 0 0 438.50 220.76V218.67A2.1 2.1 0 0 0 438.50 214.47V212.39A2.1 2.1 0 0 0 438.50 208.19V206.10A2.1 2.1 0 0 0 438.50 201.90V199.81A2.1 2.1 0 0 0 438.50 195.61V193.53A2.1 2.1 0 0 0 438.50 189.33V187.24A2.1 2.1 0 0 0 438.50 183.04V180.96A2.1 2.1 0 0 0 438.50 176.76V174.67A2.1 2.1 0 0 0 438.50 170.47V168.39A2.1 2.1 0 0 0 438.50 164.19V162.10A2.1 2.1 0 0 0 438.50 157.90V155.81A2.1 2.1 0 0 0 438.50 151.61V149.53A2.1 2.1 0 0 0 438.50 145.33V143.24A2.1 2.1 0 0 0 438.50 139.04Z" fill="#bfc5cd" opacity="0.85" filter="url(#bl)"/><path d="M438.50 136.50H439.47A2.1 2.1 0 0 0 443.67 136.50H445.61A2.1 2.1 0 0 0 449.81 136.50H451.75A2.1 2.1 0 0 0 455.95 136.50H457.89A2.1 2.1 0 0 0 462.09 136.50H464.03A2.1 2.1 0 0 0 468.23 136.50H470.17A2.1 2.1 0 0 0 474.37 136.50H476.31A2.1 2.1 0 0 0 480.51 136.50H482.45A2.1 2.1 0 0 0 486.65 136.50H488.59A2.1 2.1 0 0 0 492.79 136.50H494.73A2.1 2.1 0 0 0 498.93 136.50H500.87A2.1 2.1 0 0 0 505.07 136.50H507.01A2.1 2.1 0 0 0 511.21 136.50H513.15A2.1 2.1 0 0 0 517.35 136.50H519.29A2.1 2.1 0 0 0 523.49 136.50H525.43A2.1 2.1 0 0 0 529.63 136.50H530.60V137.54A2.1 2.1 0 0 0 530.60 141.74V143.83A2.1 2.1 0 0 0 530.60 148.03V150.11A2.1 2.1 0 0 0 530.60 154.31V156.40A2.1 2.1 0 0 0 530.60 160.60V162.69A2.1 2.1 0 0 0 530.60 166.89V168.97A2.1 2.1 0 0 0 530.60 173.17V175.26A2.1 2.1 0 0 0 530.60 179.46V181.54A2.1 2.1 0 0 0 530.60 185.74V187.83A2.1 2.1 0 0 0 530.60 192.03V194.11A2.1 2.1 0 0 0 530.60 198.31V200.40A2.1 2.1 0 0 0 530.60 204.60V206.69A2.1 2.1 0 0 0 530.60 210.89V212.97A2.1 2.1 0 0 0 530.60 217.17V219.26A2.1 2.1 0 0 0 530.60 223.46V224.50H529.63A2.1 2.1 0 0 0 525.43 224.50H523.49A2.1 2.1 0 0 0 519.29 224.50H517.35A2.1 2.1 0 0 0 513.15 224.50H511.21A2.1 2.1 0 0 0 507.01 224.50H505.07A2.1 2.1 0 0 0 500.87 224.50H498.93A2.1 2.1 0 0 0 494.73 224.50H492.79A2.1 2.1 0 0 0 488.59 224.50H486.65A2.1 2.1 0 0 0 482.45 224.50H480.51A2.1 2.1 0 0 0 476.31 224.50H474.37A2.1 2.1 0 0 0 470.17 224.50H468.23A2.1 2.1 0 0 0 464.03 224.50H462.09A2.1 2.1 0 0 0 457.89 224.50H455.95A2.1 2.1 0 0 0 451.75 224.50H449.81A2.1 2.1 0 0 0 445.61 224.50H443.67A2.1 2.1 0 0 0 439.47 224.50H438.50V223.46A2.1 2.1 0 0 0 438.50 219.26V217.17A2.1 2.1 0 0 0 438.50 212.97V210.89A2.1 2.1 0 0 0 438.50 206.69V204.60A2.1 2.1 0 0 0 438.50 200.40V198.31A2.1 2.1 0 0 0 438.50 194.11V192.03A2.1 2.1 0 0 0 438.50 187.83V185.74A2.1 2.1 0 0 0 438.50 181.54V179.46A2.1 2.1 0 0 0 438.50 175.26V173.17A2.1 2.1 0 0 0 438.50 168.97V166.89A2.1 2.1 0 0 0 438.50 162.69V160.60A2.1 2.1 0 0 0 438.50 156.40V154.31A2.1 2.1 0 0 0 438.50 150.11V148.03A2.1 2.1 0 0 0 438.50 143.83V141.74A2.1 2.1 0 0 0 438.50 137.54Z" fill="#fff"/><svg x="445.3" y="142.7" width="78.8" height="74.6" viewBox="0 0 78.8 74.6"><rect width="80" height="76" fill="#40acd8"/><defs><clipPath id="dcl"><path d="M28.8 29.6H20.6Q11.2 46 7.6 74.6H28.8Z"/></clipPath></defs><path d="M31.6 31.6A30 20 0 0 1 66.5 37.4" fill="none" stroke="#8dc03f" stroke-width="2.7" stroke-linecap="round"/><path d="M69.6 40.3A30 20 0 0 1 56.8 67.9" fill="none" stroke="#8dc03f" stroke-width="2.7" stroke-linecap="round"/><path d="M44.4 39.5Q45.6 31.1 48.5 33.3" fill="none" stroke="#aacf58" stroke-width="1.45" stroke-linecap="round"/><path d="M44.4 42.0Q48.6 33.0 55.2 34.8" fill="none" stroke="#aacf58" stroke-width="1.45" stroke-linecap="round"/><path d="M44.4 44.5Q51.2 35.9 60.9 37.4" fill="none" stroke="#aacf58" stroke-width="1.45" stroke-linecap="round"/><path d="M44.4 47.0Q53.1 39.6 65.3 40.8" fill="none" stroke="#aacf58" stroke-width="1.45" stroke-linecap="round"/><path d="M44.4 49.5Q54.3 44.0 67.9 44.8" fill="none" stroke="#aacf58" stroke-width="1.45" stroke-linecap="round"/><path d="M44.4 52.0Q54.7 48.6 68.7 49.0" fill="none" stroke="#aacf58" stroke-width="1.45" stroke-linecap="round"/><path d="M44.4 54.5Q54.1 53.2 67.5 53.3" fill="none" stroke="#aacf58" stroke-width="1.45" stroke-linecap="round"/><path d="M44.4 57.0Q52.7 57.2 64.3 57.2" fill="none" stroke="#aacf58" stroke-width="1.45" stroke-linecap="round"/><path d="M42.0 39.5Q40.8 31.1 37.9 33.3" fill="none" stroke="#aacf58" stroke-width="1.45" stroke-linecap="round"/><path d="M42.0 42.0Q37.8 33.0 31.2 34.8" fill="none" stroke="#aacf58" stroke-width="1.45" stroke-linecap="round"/><path d="M42.0 44.5Q35.2 35.9 25.5 37.4" fill="none" stroke="#aacf58" stroke-width="1.45" stroke-linecap="round"/><path d="M42.0 47.0Q33.3 39.6 21.1 40.8" fill="none" stroke="#aacf58" stroke-width="1.45" stroke-linecap="round"/><path d="M42.0 49.5Q32.1 44.0 18.5 44.8" fill="none" stroke="#aacf58" stroke-width="1.45" stroke-linecap="round"/><path d="M42.0 52.0Q31.7 48.6 17.7 49.0" fill="none" stroke="#aacf58" stroke-width="1.45" stroke-linecap="round"/><path d="M42.0 54.5Q32.3 53.2 18.9 53.3" fill="none" stroke="#aacf58" stroke-width="1.45" stroke-linecap="round"/><path d="M42.0 57.0Q33.7 57.2 22.1 57.2" fill="none" stroke="#aacf58" stroke-width="1.45" stroke-linecap="round"/><path d="M43.2 38V33.6" stroke="#aacf58" stroke-width="1.45" stroke-linecap="round"/><rect x="41.4" y="37.6" width="3.6" height="38" fill="#69ab35"/><path d="M36.6 60.3L39.6 57.6V63ZM49.8 60.3L46.8 57.6V63Z" fill="#69ab35"/><path d="M29 10Q12 30 7.6 74.6H29Z" fill="#40acd8"/><path d="M28.8 29.6H20.6Q11.2 46 7.6 74.6H28.8Z" fill="#c3cde0"/><g clip-path="url(#dcl)"><rect x="8" y="30.20" width="22" height="1.0" fill="#24386a"/><rect x="8" y="31.52" width="22" height="1.0" fill="#24386a"/><rect x="8" y="32.84" width="22" height="1.0" fill="#24386a"/><rect x="8" y="34.16" width="22" height="1.0" fill="#24386a"/><rect x="8" y="35.48" width="22" height="1.0" fill="#24386a"/><rect x="8" y="36.80" width="22" height="1.0" fill="#24386a"/><rect x="8" y="38.12" width="22" height="1.0" fill="#24386a"/><rect x="8" y="39.44" width="22" height="1.0" fill="#24386a"/><rect x="8" y="40.76" width="22" height="1.0" fill="#24386a"/><rect x="8" y="42.08" width="22" height="1.0" fill="#24386a"/><rect x="8" y="43.40" width="22" height="1.0" fill="#24386a"/><rect x="8" y="44.72" width="22" height="1.0" fill="#24386a"/><rect x="8" y="46.04" width="22" height="1.0" fill="#24386a"/><rect x="8" y="47.36" width="22" height="1.0" fill="#24386a"/><rect x="8" y="48.68" width="22" height="1.0" fill="#24386a"/><rect x="8" y="50.00" width="22" height="1.0" fill="#24386a"/><rect x="8" y="51.32" width="22" height="1.0" fill="#24386a"/><rect x="8" y="52.64" width="22" height="1.0" fill="#24386a"/><rect x="8" y="53.96" width="22" height="1.0" fill="#24386a"/><rect x="8" y="55.28" width="22" height="1.0" fill="#24386a"/><rect x="8" y="56.60" width="22" height="1.0" fill="#24386a"/><rect x="8" y="57.92" width="22" height="1.0" fill="#24386a"/><rect x="8" y="59.24" width="22" height="1.0" fill="#24386a"/><rect x="8" y="60.56" width="22" height="1.0" fill="#24386a"/><rect x="8" y="61.88" width="22" height="1.0" fill="#24386a"/><rect x="8" y="63.20" width="22" height="1.0" fill="#24386a"/><rect x="8" y="64.52" width="22" height="1.0" fill="#24386a"/><rect x="8" y="65.84" width="22" height="1.0" fill="#24386a"/><rect x="8" y="67.16" width="22" height="1.0" fill="#24386a"/><rect x="8" y="68.48" width="22" height="1.0" fill="#24386a"/><rect x="8" y="69.80" width="22" height="1.0" fill="#24386a"/><rect x="8" y="71.12" width="22" height="1.0" fill="#24386a"/><rect x="8" y="72.44" width="22" height="1.0" fill="#24386a"/><rect x="8" y="73.76" width="22" height="1.0" fill="#24386a"/><rect x="8" y="75.08" width="22" height="1.0" fill="#24386a"/></g><path d="M29.4 9.4Q11.5 29 7.4 74.6" fill="none" stroke="#f6f8fa" stroke-width="1.7"/><path d="M29.4 14.5Q15.5 33 11.6 74.6" fill="none" stroke="#f6f8fa" stroke-width="1.5"/><rect x="28.6" y="8.8" width="2.6" height="65.8" fill="#f6f8fa"/><rect x="10.3" y="25.8" width="24.7" height="1.1" fill="#f6f8fa"/><text x="4.7" y="9.9" font-family="Liberation Sans, sans-serif" font-size="11.2" fill="#1f2a4a" textLength="34.4" lengthAdjust="spacingAndGlyphs">DUBAI</text><text x="58.6" y="10.9" font-family="Liberation Serif, serif" font-size="10.6" fill="#fff" textLength="16.5" lengthAdjust="spacingAndGlyphs">130</text></svg></svg>
    <svg class="abs" style="left:484.1px;top:64.1px" width="82.1" height="111.9" viewBox="653.1 125.1 82.1 111.9"><path d="M656.10 129.60H657.17A2.1 2.1 0 0 0 661.37 129.60H663.51A2.1 2.1 0 0 0 667.71 129.60H669.85A2.1 2.1 0 0 0 674.05 129.60H676.20A2.1 2.1 0 0 0 680.40 129.60H682.54A2.1 2.1 0 0 0 686.74 129.60H688.88A2.1 2.1 0 0 0 693.08 129.60H695.22A2.1 2.1 0 0 0 699.42 129.60H701.56A2.1 2.1 0 0 0 705.76 129.60H707.90A2.1 2.1 0 0 0 712.10 129.60H714.25A2.1 2.1 0 0 0 718.45 129.60H720.59A2.1 2.1 0 0 0 724.79 129.60H726.93A2.1 2.1 0 0 0 731.13 129.60H732.20V130.56A2.1 2.1 0 0 0 732.20 134.76V136.67A2.1 2.1 0 0 0 732.20 140.87V142.78A2.1 2.1 0 0 0 732.20 146.98V148.89A2.1 2.1 0 0 0 732.20 153.09V155.00A2.1 2.1 0 0 0 732.20 159.20V161.11A2.1 2.1 0 0 0 732.20 165.31V167.23A2.1 2.1 0 0 0 732.20 171.43V173.34A2.1 2.1 0 0 0 732.20 177.54V179.45A2.1 2.1 0 0 0 732.20 183.65V185.56A2.1 2.1 0 0 0 732.20 189.76V191.67A2.1 2.1 0 0 0 732.20 195.87V197.79A2.1 2.1 0 0 0 732.20 201.99V203.90A2.1 2.1 0 0 0 732.20 208.10V210.01A2.1 2.1 0 0 0 732.20 214.21V216.12A2.1 2.1 0 0 0 732.20 220.32V222.23A2.1 2.1 0 0 0 732.20 226.43V228.34A2.1 2.1 0 0 0 732.20 232.54V233.50H731.13A2.1 2.1 0 0 0 726.93 233.50H724.79A2.1 2.1 0 0 0 720.59 233.50H718.45A2.1 2.1 0 0 0 714.25 233.50H712.10A2.1 2.1 0 0 0 707.90 233.50H705.76A2.1 2.1 0 0 0 701.56 233.50H699.42A2.1 2.1 0 0 0 695.22 233.50H693.08A2.1 2.1 0 0 0 688.88 233.50H686.74A2.1 2.1 0 0 0 682.54 233.50H680.40A2.1 2.1 0 0 0 676.20 233.50H674.05A2.1 2.1 0 0 0 669.85 233.50H667.71A2.1 2.1 0 0 0 663.51 233.50H661.37A2.1 2.1 0 0 0 657.17 233.50H656.10V232.54A2.1 2.1 0 0 0 656.10 228.34V226.43A2.1 2.1 0 0 0 656.10 222.23V220.32A2.1 2.1 0 0 0 656.10 216.12V214.21A2.1 2.1 0 0 0 656.10 210.01V208.10A2.1 2.1 0 0 0 656.10 203.90V201.99A2.1 2.1 0 0 0 656.10 197.79V195.87A2.1 2.1 0 0 0 656.10 191.67V189.76A2.1 2.1 0 0 0 656.10 185.56V183.65A2.1 2.1 0 0 0 656.10 179.45V177.54A2.1 2.1 0 0 0 656.10 173.34V171.43A2.1 2.1 0 0 0 656.10 167.23V165.31A2.1 2.1 0 0 0 656.10 161.11V159.20A2.1 2.1 0 0 0 656.10 155.00V153.09A2.1 2.1 0 0 0 656.10 148.89V146.98A2.1 2.1 0 0 0 656.10 142.78V140.87A2.1 2.1 0 0 0 656.10 136.67V134.76A2.1 2.1 0 0 0 656.10 130.56Z" fill="#bfc5cd" opacity="0.85" filter="url(#bl)"/><path d="M656.10 128.10H657.17A2.1 2.1 0 0 0 661.37 128.10H663.51A2.1 2.1 0 0 0 667.71 128.10H669.85A2.1 2.1 0 0 0 674.05 128.10H676.20A2.1 2.1 0 0 0 680.40 128.10H682.54A2.1 2.1 0 0 0 686.74 128.10H688.88A2.1 2.1 0 0 0 693.08 128.10H695.22A2.1 2.1 0 0 0 699.42 128.10H701.56A2.1 2.1 0 0 0 705.76 128.10H707.90A2.1 2.1 0 0 0 712.10 128.10H714.25A2.1 2.1 0 0 0 718.45 128.10H720.59A2.1 2.1 0 0 0 724.79 128.10H726.93A2.1 2.1 0 0 0 731.13 128.10H732.20V129.06A2.1 2.1 0 0 0 732.20 133.26V135.17A2.1 2.1 0 0 0 732.20 139.37V141.28A2.1 2.1 0 0 0 732.20 145.48V147.39A2.1 2.1 0 0 0 732.20 151.59V153.50A2.1 2.1 0 0 0 732.20 157.70V159.61A2.1 2.1 0 0 0 732.20 163.81V165.73A2.1 2.1 0 0 0 732.20 169.93V171.84A2.1 2.1 0 0 0 732.20 176.04V177.95A2.1 2.1 0 0 0 732.20 182.15V184.06A2.1 2.1 0 0 0 732.20 188.26V190.17A2.1 2.1 0 0 0 732.20 194.37V196.29A2.1 2.1 0 0 0 732.20 200.49V202.40A2.1 2.1 0 0 0 732.20 206.60V208.51A2.1 2.1 0 0 0 732.20 212.71V214.62A2.1 2.1 0 0 0 732.20 218.82V220.73A2.1 2.1 0 0 0 732.20 224.93V226.84A2.1 2.1 0 0 0 732.20 231.04V232.00H731.13A2.1 2.1 0 0 0 726.93 232.00H724.79A2.1 2.1 0 0 0 720.59 232.00H718.45A2.1 2.1 0 0 0 714.25 232.00H712.10A2.1 2.1 0 0 0 707.90 232.00H705.76A2.1 2.1 0 0 0 701.56 232.00H699.42A2.1 2.1 0 0 0 695.22 232.00H693.08A2.1 2.1 0 0 0 688.88 232.00H686.74A2.1 2.1 0 0 0 682.54 232.00H680.40A2.1 2.1 0 0 0 676.20 232.00H674.05A2.1 2.1 0 0 0 669.85 232.00H667.71A2.1 2.1 0 0 0 663.51 232.00H661.37A2.1 2.1 0 0 0 657.17 232.00H656.10V231.04A2.1 2.1 0 0 0 656.10 226.84V224.93A2.1 2.1 0 0 0 656.10 220.73V218.82A2.1 2.1 0 0 0 656.10 214.62V212.71A2.1 2.1 0 0 0 656.10 208.51V206.60A2.1 2.1 0 0 0 656.10 202.40V200.49A2.1 2.1 0 0 0 656.10 196.29V194.37A2.1 2.1 0 0 0 656.10 190.17V188.26A2.1 2.1 0 0 0 656.10 184.06V182.15A2.1 2.1 0 0 0 656.10 177.95V176.04A2.1 2.1 0 0 0 656.10 171.84V169.93A2.1 2.1 0 0 0 656.10 165.73V163.81A2.1 2.1 0 0 0 656.10 159.61V157.70A2.1 2.1 0 0 0 656.10 153.50V151.59A2.1 2.1 0 0 0 656.10 147.39V145.48A2.1 2.1 0 0 0 656.10 141.28V139.37A2.1 2.1 0 0 0 656.10 135.17V133.26A2.1 2.1 0 0 0 656.10 129.06Z" fill="#fff"/><svg x="662.2" y="133.7" width="63.7" height="91.7" viewBox="0 0 63.7 91.7"><rect width="64" height="92" fill="#d9824a"/><path d="M0 66H3.6V42.5H6V40.6H11.4V42.5H13.3V66H46.2V54H49.5V51.5H53V54H55.5V59H58V57H61.5V60H63.7V89.3H0Z" fill="#2b2b38"/><path d="M25.2 22.3H25.8L26.3 30L27.7 34L28.7 40L29.7 50V80.7H21.3V50L22.3 40L23.3 34L24.7 30Z" fill="#3a3a32"/><rect x="24.6" y="33" width="1.8" height="1.45" fill="#c9d44c"/><rect x="24.6" y="35" width="1.8" height="1.45" fill="#c9d44c"/><rect x="23.7" y="37" width="3.6" height="1.45" fill="#c9d44c"/><rect x="23.7" y="39" width="3.6" height="1.45" fill="#c9d44c"/><rect x="22.9" y="41" width="5.2" height="1.45" fill="#c9d44c"/><rect x="22.9" y="43" width="5.2" height="1.45" fill="#c9d44c"/><rect x="22.9" y="45" width="5.2" height="1.45" fill="#c9d44c"/><rect x="22.9" y="47" width="5.2" height="1.45" fill="#c9d44c"/><rect x="22.9" y="49" width="5.2" height="1.45" fill="#c9d44c"/><rect x="22.1" y="51" width="6.8" height="1.45" fill="#c9d44c"/><rect x="22.1" y="53" width="6.8" height="1.45" fill="#c9d44c"/><rect x="22.1" y="55" width="6.8" height="1.45" fill="#c9d44c"/><rect x="22.1" y="57" width="6.8" height="1.45" fill="#c9d44c"/><rect x="22.1" y="59" width="6.8" height="1.45" fill="#c9d44c"/><rect x="22.1" y="61" width="6.8" height="1.45" fill="#c9d44c"/><rect x="22.1" y="63" width="6.8" height="1.45" fill="#c9d44c"/><rect x="22.1" y="65" width="6.8" height="1.45" fill="#c9d44c"/><rect x="22.1" y="67" width="6.8" height="1.45" fill="#c9d44c"/><rect x="22.1" y="69" width="6.8" height="1.45" fill="#c9d44c"/><rect x="22.1" y="71" width="6.8" height="1.45" fill="#c9d44c"/><rect x="22.1" y="73" width="6.8" height="1.45" fill="#c9d44c"/><rect x="22.1" y="75" width="6.8" height="1.45" fill="#c9d44c"/><rect x="22.1" y="77" width="6.8" height="1.45" fill="#c9d44c"/><rect x="22.1" y="79" width="6.8" height="1.45" fill="#c9d44c"/><rect x="25.15" y="32" width="0.7" height="48.7" fill="#3a3a32"/><rect x="23.4" y="40" width="0.5" height="40.7" fill="#3a3a32"/><rect x="27.1" y="40" width="0.5" height="40.7" fill="#3a3a32"/><path d="M39.300000000000004 22.3H39.9L40.4 30L41.800000000000004 34L42.800000000000004 40L43.800000000000004 50V80.7H35.4V50L36.4 40L37.4 34L38.800000000000004 30Z" fill="#3a3a32"/><rect x="38.7" y="33" width="1.8" height="1.45" fill="#c9d44c"/><rect x="38.7" y="35" width="1.8" height="1.45" fill="#c9d44c"/><rect x="37.8" y="37" width="3.6" height="1.45" fill="#c9d44c"/><rect x="37.8" y="39" width="3.6" height="1.45" fill="#c9d44c"/><rect x="37.0" y="41" width="5.2" height="1.45" fill="#c9d44c"/><rect x="37.0" y="43" width="5.2" height="1.45" fill="#c9d44c"/><rect x="37.0" y="45" width="5.2" height="1.45" fill="#c9d44c"/><rect x="37.0" y="47" width="5.2" height="1.45" fill="#c9d44c"/><rect x="37.0" y="49" width="5.2" height="1.45" fill="#c9d44c"/><rect x="36.2" y="51" width="6.8" height="1.45" fill="#c9d44c"/><rect x="36.2" y="53" width="6.8" height="1.45" fill="#c9d44c"/><rect x="36.2" y="55" width="6.8" height="1.45" fill="#c9d44c"/><rect x="36.2" y="57" width="6.8" height="1.45" fill="#c9d44c"/><rect x="36.2" y="59" width="6.8" height="1.45" fill="#c9d44c"/><rect x="36.2" y="61" width="6.8" height="1.45" fill="#c9d44c"/><rect x="36.2" y="63" width="6.8" height="1.45" fill="#c9d44c"/><rect x="36.2" y="65" width="6.8" height="1.45" fill="#c9d44c"/><rect x="36.2" y="67" width="6.8" height="1.45" fill="#c9d44c"/><rect x="36.2" y="69" width="6.8" height="1.45" fill="#c9d44c"/><rect x="36.2" y="71" width="6.8" height="1.45" fill="#c9d44c"/><rect x="36.2" y="73" width="6.8" height="1.45" fill="#c9d44c"/><rect x="36.2" y="75" width="6.8" height="1.45" fill="#c9d44c"/><rect x="36.2" y="77" width="6.8" height="1.45" fill="#c9d44c"/><rect x="36.2" y="79" width="6.8" height="1.45" fill="#c9d44c"/><rect x="39.25" y="32" width="0.7" height="48.7" fill="#3a3a32"/><rect x="37.5" y="40" width="0.5" height="40.7" fill="#3a3a32"/><rect x="41.2" y="40" width="0.5" height="40.7" fill="#3a3a32"/><rect x="29.5" y="60.3" width="6.2" height="1.8" fill="#3a3a32"/><path d="M29.8 72L32.6 62L35.4 72" fill="none" stroke="#e8943a" stroke-width="0.9"/><path d="M12.1 80.7H54V86L42 88.5V91.7H24V88.5L12.1 86Z" fill="#e38d52"/><path d="M24 88.5L32.5 86.5L42 88.5V91.7H24Z" fill="#d9824a"/><text x="3.6" y="9" font-family="Liberation Sans, sans-serif" font-size="8.2" fill="#fff" textLength="27.5" lengthAdjust="spacingAndGlyphs">KUALA</text><text x="3.6" y="17.4" font-family="Liberation Sans, sans-serif" font-size="8.2" fill="#fff" textLength="33.6" lengthAdjust="spacingAndGlyphs">LUMPUR</text><text x="51.5" y="10.2" font-family="Liberation Sans, sans-serif" font-size="8.4" fill="#fff" textLength="9.3">53</text></svg></svg>
    <svg class="abs" style="left:55.3px;top:294.3px" width="99.6" height="79.7" viewBox="224.3 355.3 99.6 79.7"><path d="M227.30 359.80H228.32A2.1 2.1 0 0 0 232.52 359.80H234.56A2.1 2.1 0 0 0 238.76 359.80H240.80A2.1 2.1 0 0 0 245.00 359.80H247.04A2.1 2.1 0 0 0 251.24 359.80H253.28A2.1 2.1 0 0 0 257.48 359.80H259.52A2.1 2.1 0 0 0 263.72 359.80H265.76A2.1 2.1 0 0 0 269.96 359.80H272.00A2.1 2.1 0 0 0 276.20 359.80H278.24A2.1 2.1 0 0 0 282.44 359.80H284.48A2.1 2.1 0 0 0 288.68 359.80H290.72A2.1 2.1 0 0 0 294.92 359.80H296.96A2.1 2.1 0 0 0 301.16 359.80H303.20A2.1 2.1 0 0 0 307.40 359.80H309.44A2.1 2.1 0 0 0 313.64 359.80H315.68A2.1 2.1 0 0 0 319.88 359.80H320.90V360.69A2.1 2.1 0 0 0 320.90 364.89V366.66A2.1 2.1 0 0 0 320.90 370.86V372.64A2.1 2.1 0 0 0 320.90 376.84V378.61A2.1 2.1 0 0 0 320.90 382.81V384.59A2.1 2.1 0 0 0 320.90 388.79V390.56A2.1 2.1 0 0 0 320.90 394.76V396.54A2.1 2.1 0 0 0 320.90 400.74V402.51A2.1 2.1 0 0 0 320.90 406.71V408.49A2.1 2.1 0 0 0 320.90 412.69V414.46A2.1 2.1 0 0 0 320.90 418.66V420.44A2.1 2.1 0 0 0 320.90 424.64V426.41A2.1 2.1 0 0 0 320.90 430.61V431.50H319.88A2.1 2.1 0 0 0 315.68 431.50H313.64A2.1 2.1 0 0 0 309.44 431.50H307.40A2.1 2.1 0 0 0 303.20 431.50H301.16A2.1 2.1 0 0 0 296.96 431.50H294.92A2.1 2.1 0 0 0 290.72 431.50H288.68A2.1 2.1 0 0 0 284.48 431.50H282.44A2.1 2.1 0 0 0 278.24 431.50H276.20A2.1 2.1 0 0 0 272.00 431.50H269.96A2.1 2.1 0 0 0 265.76 431.50H263.72A2.1 2.1 0 0 0 259.52 431.50H257.48A2.1 2.1 0 0 0 253.28 431.50H251.24A2.1 2.1 0 0 0 247.04 431.50H245.00A2.1 2.1 0 0 0 240.80 431.50H238.76A2.1 2.1 0 0 0 234.56 431.50H232.52A2.1 2.1 0 0 0 228.32 431.50H227.30V430.61A2.1 2.1 0 0 0 227.30 426.41V424.64A2.1 2.1 0 0 0 227.30 420.44V418.66A2.1 2.1 0 0 0 227.30 414.46V412.69A2.1 2.1 0 0 0 227.30 408.49V406.71A2.1 2.1 0 0 0 227.30 402.51V400.74A2.1 2.1 0 0 0 227.30 396.54V394.76A2.1 2.1 0 0 0 227.30 390.56V388.79A2.1 2.1 0 0 0 227.30 384.59V382.81A2.1 2.1 0 0 0 227.30 378.61V376.84A2.1 2.1 0 0 0 227.30 372.64V370.86A2.1 2.1 0 0 0 227.30 366.66V364.89A2.1 2.1 0 0 0 227.30 360.69Z" fill="#bfc5cd" opacity="0.85" filter="url(#bl)"/><path d="M227.30 358.30H228.32A2.1 2.1 0 0 0 232.52 358.30H234.56A2.1 2.1 0 0 0 238.76 358.30H240.80A2.1 2.1 0 0 0 245.00 358.30H247.04A2.1 2.1 0 0 0 251.24 358.30H253.28A2.1 2.1 0 0 0 257.48 358.30H259.52A2.1 2.1 0 0 0 263.72 358.30H265.76A2.1 2.1 0 0 0 269.96 358.30H272.00A2.1 2.1 0 0 0 276.20 358.30H278.24A2.1 2.1 0 0 0 282.44 358.30H284.48A2.1 2.1 0 0 0 288.68 358.30H290.72A2.1 2.1 0 0 0 294.92 358.30H296.96A2.1 2.1 0 0 0 301.16 358.30H303.20A2.1 2.1 0 0 0 307.40 358.30H309.44A2.1 2.1 0 0 0 313.64 358.30H315.68A2.1 2.1 0 0 0 319.88 358.30H320.90V359.19A2.1 2.1 0 0 0 320.90 363.39V365.16A2.1 2.1 0 0 0 320.90 369.36V371.14A2.1 2.1 0 0 0 320.90 375.34V377.11A2.1 2.1 0 0 0 320.90 381.31V383.09A2.1 2.1 0 0 0 320.90 387.29V389.06A2.1 2.1 0 0 0 320.90 393.26V395.04A2.1 2.1 0 0 0 320.90 399.24V401.01A2.1 2.1 0 0 0 320.90 405.21V406.99A2.1 2.1 0 0 0 320.90 411.19V412.96A2.1 2.1 0 0 0 320.90 417.16V418.94A2.1 2.1 0 0 0 320.90 423.14V424.91A2.1 2.1 0 0 0 320.90 429.11V430.00H319.88A2.1 2.1 0 0 0 315.68 430.00H313.64A2.1 2.1 0 0 0 309.44 430.00H307.40A2.1 2.1 0 0 0 303.20 430.00H301.16A2.1 2.1 0 0 0 296.96 430.00H294.92A2.1 2.1 0 0 0 290.72 430.00H288.68A2.1 2.1 0 0 0 284.48 430.00H282.44A2.1 2.1 0 0 0 278.24 430.00H276.20A2.1 2.1 0 0 0 272.00 430.00H269.96A2.1 2.1 0 0 0 265.76 430.00H263.72A2.1 2.1 0 0 0 259.52 430.00H257.48A2.1 2.1 0 0 0 253.28 430.00H251.24A2.1 2.1 0 0 0 247.04 430.00H245.00A2.1 2.1 0 0 0 240.80 430.00H238.76A2.1 2.1 0 0 0 234.56 430.00H232.52A2.1 2.1 0 0 0 228.32 430.00H227.30V429.11A2.1 2.1 0 0 0 227.30 424.91V423.14A2.1 2.1 0 0 0 227.30 418.94V417.16A2.1 2.1 0 0 0 227.30 412.96V411.19A2.1 2.1 0 0 0 227.30 406.99V405.21A2.1 2.1 0 0 0 227.30 401.01V399.24A2.1 2.1 0 0 0 227.30 395.04V393.26A2.1 2.1 0 0 0 227.30 389.06V387.29A2.1 2.1 0 0 0 227.30 383.09V381.31A2.1 2.1 0 0 0 227.30 377.11V375.34A2.1 2.1 0 0 0 227.30 371.14V369.36A2.1 2.1 0 0 0 227.30 365.16V363.39A2.1 2.1 0 0 0 227.30 359.19Z" fill="#fff"/><svg x="233.3" y="364.4" width="82.3" height="59.6" viewBox="0 0 82.3 59.6"><rect width="83" height="60" fill="#e8d3b8"/><path d="M59.6 11.5L57.2 21L55 26.5L53.9 34V60H65.9V34L64.6 26.5L62 21Z" fill="#e2553a"/><path d="M59.6 6.2L60.9 9.6Q61.6 11.5 59.6 12Q57.6 11.5 58.3 9.6Z" fill="#f5c71a"/><rect x="36.8" y="37.5" width="8.8" height="22.5" fill="#e2553a"/><path d="M34 46H48.5V60H34Z" fill="#e2553a"/><path d="M40.3 27.1Q40.9 30.05 46.49999999999999 33.59Q47.89999999999999 37.13 44.379999999999995 38.900000000000006H36.22Q32.7 37.13 34.1 33.59Q39.699999999999996 30.05 40.3 27.1Z" fill="#3f8f5a"/><path d="M38.3 31.2Q35.0 35.4 36.6 38.9" fill="none" stroke="#fff" stroke-width="0.8"/><path d="M39.6 31.2Q38.5 35.4 39.1 38.9" fill="none" stroke="#fff" stroke-width="0.8"/><path d="M41.0 31.2Q42.1 35.4 41.5 38.9" fill="none" stroke="#fff" stroke-width="0.8"/><path d="M42.3 31.2Q45.6 35.4 44.0 38.9" fill="none" stroke="#fff" stroke-width="0.8"/><path d="M40.3 24.6L41 26.6H39.6Z" fill="#f5c71a"/><rect x="62.7" y="37" width="14.3" height="23" fill="#e2553a"/><path d="M67.9 26.1Q68.5 28.925 73.75000000000001 32.315000000000005Q75.15 35.705 71.77000000000001 37.400000000000006H64.03Q60.650000000000006 35.705 62.050000000000004 32.315000000000005Q67.30000000000001 28.925 67.9 26.1Z" fill="#2f7fc0"/><path d="M66.0 30.1Q62.9 34.0 64.4 37.4" fill="none" stroke="#fff" stroke-width="0.8"/><path d="M67.3 30.1Q66.2 34.0 66.7 37.4" fill="none" stroke="#fff" stroke-width="0.8"/><path d="M68.5 30.1Q69.6 34.0 69.1 37.4" fill="none" stroke="#fff" stroke-width="0.8"/><path d="M69.8 30.1Q72.9 34.0 71.4 37.4" fill="none" stroke="#fff" stroke-width="0.8"/><path d="M67.9 23.4L68.6 25.6H67.2Z" fill="#f5c71a"/><path d="M48.3 38.5Q51.5 40 52.3 43.5Q52 45.5 48.3 46Q44.6 45.5 44.3 43.5Q45.1 40 48.3 38.5Z" fill="#d94a5a"/><path d="M45.5 42L51 44.5M46 40.6L52 43" stroke="#f6c9cf" stroke-width="0.6"/><path d="M53.6 36.5Q56.3 38.5 56.8 41.2Q56.5 43 53.6 43.3Q50.7 43 50.4 41.2Q50.9 38.5 53.6 36.5Z" fill="#4a3a3a"/><path d="M48.3 36.6L48.8 38.3H47.8ZM53.6 34.6L54.1 36.3H53.1Z" fill="#f5c71a"/><path d="M43.3 47.8Q46.5 49.6 47 52.5Q46.6 54 43.3 54.3Q40 54 39.6 52.5Q40.1 49.6 43.3 47.8Z" fill="#4a9a5f"/><rect x="34.5" y="45.3" width="6" height="0.9" fill="#fff"/><rect x="64.3" y="43.6" width="2.6" height="0.9" fill="#fff"/><rect x="68" y="43.6" width="4.6" height="0.9" fill="#fff"/><rect x="64" y="45.6" width="11" height="0.7" fill="#fff"/><path d="M63.6 56L65.2 49.5L66.8 56L68.4 49.5L70 56L71.6 49.5L73.2 56L74.8 49.5" fill="none" stroke="#fff" stroke-width="0.7"/><path d="M48 51.5Q49 49.8 50 51.5Q51 49.8 52 51.5Q53 49.8 54 51.5M48 54Q49 52.3 50 54Q51 52.3 52 54Q53 52.3 54 54" fill="none" stroke="#fff" stroke-width="0.6"/><path d="M35.3 56L36.3 51L37.3 56" fill="none" stroke="#fff" stroke-width="0.6"/><path d="M23.4 41.5L25.3 50.5L25.9 60H20.9L21.5 50.5Z" fill="#3c3030"/><circle cx="23.4" cy="41.6" r="0.8" fill="#4a9a5f"/><path d="M22.6 47.5H24.2M22.2 51H24.6M21.6 55H25.2" stroke="#d44a3a" stroke-width="0.6"/><text transform="translate(12.1,68.4) rotate(-90)" font-family="Liberation Sans, sans-serif" font-size="11.6" fill="#2d2d2d">MOSCOW</text><text x="68.4" y="9.9" font-family="Liberation Serif, serif" font-size="9.7" fill="#2d2d2d" textLength="9.7">15</text></svg></svg>
    <svg class="abs" style="left:275.7px;top:293.3px" width="78.6" height="80.7" viewBox="444.7 354.3 78.6 80.7"><path d="M447.70 358.80H448.62A2.1 2.1 0 0 0 452.82 358.80H454.67A2.1 2.1 0 0 0 458.88 358.80H460.72A2.1 2.1 0 0 0 464.93 358.80H466.77A2.1 2.1 0 0 0 470.98 358.80H472.82A2.1 2.1 0 0 0 477.02 358.80H478.87A2.1 2.1 0 0 0 483.07 358.80H484.92A2.1 2.1 0 0 0 489.12 358.80H490.97A2.1 2.1 0 0 0 495.18 358.80H497.02A2.1 2.1 0 0 0 501.22 358.80H503.07A2.1 2.1 0 0 0 507.27 358.80H509.12A2.1 2.1 0 0 0 513.32 358.80H515.17A2.1 2.1 0 0 0 519.38 358.80H520.30V359.73A2.1 2.1 0 0 0 520.30 363.93V365.79A2.1 2.1 0 0 0 520.30 369.99V371.85A2.1 2.1 0 0 0 520.30 376.05V377.90A2.1 2.1 0 0 0 520.30 382.10V383.96A2.1 2.1 0 0 0 520.30 388.16V390.02A2.1 2.1 0 0 0 520.30 394.22V396.08A2.1 2.1 0 0 0 520.30 400.28V402.14A2.1 2.1 0 0 0 520.30 406.34V408.20A2.1 2.1 0 0 0 520.30 412.40V414.25A2.1 2.1 0 0 0 520.30 418.45V420.31A2.1 2.1 0 0 0 520.30 424.51V426.37A2.1 2.1 0 0 0 520.30 430.57V431.50H519.38A2.1 2.1 0 0 0 515.17 431.50H513.32A2.1 2.1 0 0 0 509.12 431.50H507.27A2.1 2.1 0 0 0 503.07 431.50H501.22A2.1 2.1 0 0 0 497.02 431.50H495.18A2.1 2.1 0 0 0 490.97 431.50H489.12A2.1 2.1 0 0 0 484.92 431.50H483.07A2.1 2.1 0 0 0 478.87 431.50H477.02A2.1 2.1 0 0 0 472.82 431.50H470.98A2.1 2.1 0 0 0 466.77 431.50H464.93A2.1 2.1 0 0 0 460.72 431.50H458.88A2.1 2.1 0 0 0 454.67 431.50H452.83A2.1 2.1 0 0 0 448.62 431.50H447.70V430.57A2.1 2.1 0 0 0 447.70 426.37V424.51A2.1 2.1 0 0 0 447.70 420.31V418.45A2.1 2.1 0 0 0 447.70 414.25V412.40A2.1 2.1 0 0 0 447.70 408.20V406.34A2.1 2.1 0 0 0 447.70 402.14V400.28A2.1 2.1 0 0 0 447.70 396.08V394.22A2.1 2.1 0 0 0 447.70 390.02V388.16A2.1 2.1 0 0 0 447.70 383.96V382.10A2.1 2.1 0 0 0 447.70 377.90V376.05A2.1 2.1 0 0 0 447.70 371.85V369.99A2.1 2.1 0 0 0 447.70 365.79V363.93A2.1 2.1 0 0 0 447.70 359.73Z" fill="#bfc5cd" opacity="0.85" filter="url(#bl)"/><path d="M447.70 357.30H448.62A2.1 2.1 0 0 0 452.82 357.30H454.67A2.1 2.1 0 0 0 458.88 357.30H460.72A2.1 2.1 0 0 0 464.93 357.30H466.77A2.1 2.1 0 0 0 470.98 357.30H472.82A2.1 2.1 0 0 0 477.02 357.30H478.87A2.1 2.1 0 0 0 483.07 357.30H484.92A2.1 2.1 0 0 0 489.12 357.30H490.97A2.1 2.1 0 0 0 495.18 357.30H497.02A2.1 2.1 0 0 0 501.22 357.30H503.07A2.1 2.1 0 0 0 507.27 357.30H509.12A2.1 2.1 0 0 0 513.32 357.30H515.17A2.1 2.1 0 0 0 519.38 357.30H520.30V358.23A2.1 2.1 0 0 0 520.30 362.43V364.29A2.1 2.1 0 0 0 520.30 368.49V370.35A2.1 2.1 0 0 0 520.30 374.55V376.40A2.1 2.1 0 0 0 520.30 380.60V382.46A2.1 2.1 0 0 0 520.30 386.66V388.52A2.1 2.1 0 0 0 520.30 392.72V394.58A2.1 2.1 0 0 0 520.30 398.78V400.64A2.1 2.1 0 0 0 520.30 404.84V406.70A2.1 2.1 0 0 0 520.30 410.90V412.75A2.1 2.1 0 0 0 520.30 416.95V418.81A2.1 2.1 0 0 0 520.30 423.01V424.87A2.1 2.1 0 0 0 520.30 429.07V430.00H519.38A2.1 2.1 0 0 0 515.17 430.00H513.32A2.1 2.1 0 0 0 509.12 430.00H507.27A2.1 2.1 0 0 0 503.07 430.00H501.22A2.1 2.1 0 0 0 497.02 430.00H495.18A2.1 2.1 0 0 0 490.97 430.00H489.12A2.1 2.1 0 0 0 484.92 430.00H483.07A2.1 2.1 0 0 0 478.87 430.00H477.02A2.1 2.1 0 0 0 472.82 430.00H470.98A2.1 2.1 0 0 0 466.77 430.00H464.93A2.1 2.1 0 0 0 460.72 430.00H458.88A2.1 2.1 0 0 0 454.67 430.00H452.83A2.1 2.1 0 0 0 448.62 430.00H447.70V429.07A2.1 2.1 0 0 0 447.70 424.87V423.01A2.1 2.1 0 0 0 447.70 418.81V416.95A2.1 2.1 0 0 0 447.70 412.75V410.90A2.1 2.1 0 0 0 447.70 406.70V404.84A2.1 2.1 0 0 0 447.70 400.64V398.78A2.1 2.1 0 0 0 447.70 394.58V392.72A2.1 2.1 0 0 0 447.70 388.52V386.66A2.1 2.1 0 0 0 447.70 382.46V380.60A2.1 2.1 0 0 0 447.70 376.40V374.55A2.1 2.1 0 0 0 447.70 370.35V368.49A2.1 2.1 0 0 0 447.70 364.29V362.43A2.1 2.1 0 0 0 447.70 358.23Z" fill="#fff"/><svg x="454.5" y="363.3" width="59.7" height="60.7" viewBox="0 0 59.7 60.7"><rect width="60" height="60" fill="#40acd8"/><path d="M0 44.5L1.6 43.5L2.5 40L3.4 43.5L10 44V60H0Z" fill="#c8922e"/><path d="M36 52.8H53.2L54 49L54.8 52.8H55.5V60H36Z" fill="#c8922e"/><g transform="translate(0,1.1)"><path d="M7.9 6.8L28.3 5.6L28.5 7.4L8.1 8.6Z" fill="#f0c46f"/><path d="M10.2 8.5L27.1 7.5L28 19.5L11.3 20.6Z" fill="#f3cd7d"/><path d="M13.3 19.5L13 14.2Q13.1 11.4 15.3 11.2Q17.6 11.2 17.9 13.9L18.2 19.2ZM20.4 19.1L20.1 13.8Q20.2 11 22.4 10.8Q24.7 10.8 25 13.5L25.3 18.8Z" fill="#40acd8"/><path d="M6.6 21H32L34 32H8.3Z" fill="#f3cd7d"/><path d="M9.4 22.8L11.2 32.0" stroke="#e0b158" stroke-width="0.7"/><path d="M12.2 22.8L14.0 32.0" stroke="#e0b158" stroke-width="0.7"/><path d="M15.1 22.8L16.9 32.0" stroke="#e0b158" stroke-width="0.7"/><path d="M17.9 22.8L19.7 32.0" stroke="#e0b158" stroke-width="0.7"/><path d="M20.7 22.8L22.6 32.0" stroke="#e0b158" stroke-width="0.7"/><path d="M23.5 22.8L25.4 32.0" stroke="#e0b158" stroke-width="0.7"/><path d="M26.4 22.8L28.3 32.0" stroke="#e0b158" stroke-width="0.7"/><path d="M29.2 22.8L31.1 32.0" stroke="#e0b158" stroke-width="0.7"/><path d="M8.3 32H34L35.6 42H9.9Z" fill="#f3cd7d"/><path d="M11.2 33.8L12.8 42.0" stroke="#e0b158" stroke-width="0.7"/><path d="M14.0 33.8L15.6 42.0" stroke="#e0b158" stroke-width="0.7"/><path d="M16.9 33.8L18.5 42.0" stroke="#e0b158" stroke-width="0.7"/><path d="M19.7 33.8L21.3 42.0" stroke="#e0b158" stroke-width="0.7"/><path d="M22.6 33.8L24.2 42.0" stroke="#e0b158" stroke-width="0.7"/><path d="M25.4 33.8L27.0 42.0" stroke="#e0b158" stroke-width="0.7"/><path d="M28.3 33.8L29.9 42.0" stroke="#e0b158" stroke-width="0.7"/><path d="M31.1 33.8L32.7 42.0" stroke="#e0b158" stroke-width="0.7"/><path d="M9.9 42H35.6L37 52.5H11.4Z" fill="#f3cd7d"/><path d="M12.8 43.8L14.2 52.5" stroke="#e0b158" stroke-width="0.7"/><path d="M15.6 43.8L17.1 52.5" stroke="#e0b158" stroke-width="0.7"/><path d="M18.5 43.8L19.9 52.5" stroke="#e0b158" stroke-width="0.7"/><path d="M21.3 43.8L22.8 52.5" stroke="#e0b158" stroke-width="0.7"/><path d="M24.2 43.8L25.6 52.5" stroke="#e0b158" stroke-width="0.7"/><path d="M27.0 43.8L28.5 52.5" stroke="#e0b158" stroke-width="0.7"/><path d="M29.9 43.8L31.3 52.5" stroke="#e0b158" stroke-width="0.7"/><path d="M32.7 43.8L34.2 52.5" stroke="#e0b158" stroke-width="0.7"/><path d="M11.4 52.5H37L38 60H12.4Z" fill="#f3cd7d"/><path d="M14.2 54.3L15.2 60.0" stroke="#e0b158" stroke-width="0.7"/><path d="M17.1 54.3L18.1 60.0" stroke="#e0b158" stroke-width="0.7"/><path d="M19.9 54.3L20.9 60.0" stroke="#e0b158" stroke-width="0.7"/><path d="M22.8 54.3L23.8 60.0" stroke="#e0b158" stroke-width="0.7"/><path d="M25.6 54.3L26.6 60.0" stroke="#e0b158" stroke-width="0.7"/><path d="M28.5 54.3L29.5 60.0" stroke="#e0b158" stroke-width="0.7"/><path d="M31.3 54.3L32.3 60.0" stroke="#e0b158" stroke-width="0.7"/><path d="M34.2 54.3L35.2 60.0" stroke="#e0b158" stroke-width="0.7"/><path d="M5.9 20.6L32.8 19.2L33 21.4L6.1 22.8Z" fill="#efc068"/><path d="M7.4 31.2L34.5 30.4L34.7 32.5L7.6 33.3Z" fill="#efc068"/><path d="M9 41.2L36.2 40.6L36.4 42.6L9.2 43.2Z" fill="#efc068"/><path d="M10.6 51.6L37.7 51.2L37.9 53.2L10.8 53.6Z" fill="#efc068"/></g><text x="39.2" y="10.2" font-family="Liberation Sans, sans-serif" font-size="9.6" fill="#fff" textLength="16.6" lengthAdjust="spacingAndGlyphs">50c</text></svg></svg>
    <svg class="abs" style="left:462.8px;top:306.9px" width="124.2" height="67.1" viewBox="631.8 367.9 124.2 67.1"><path d="M634.80 372.40H635.81A2.1 2.1 0 0 0 640.01 372.40H642.03A2.1 2.1 0 0 0 646.23 372.40H648.25A2.1 2.1 0 0 0 652.45 372.40H654.47A2.1 2.1 0 0 0 658.67 372.40H660.69A2.1 2.1 0 0 0 664.89 372.40H666.92A2.1 2.1 0 0 0 671.12 372.40H673.14A2.1 2.1 0 0 0 677.34 372.40H679.36A2.1 2.1 0 0 0 683.56 372.40H685.58A2.1 2.1 0 0 0 689.78 372.40H691.80A2.1 2.1 0 0 0 696.00 372.40H698.02A2.1 2.1 0 0 0 702.22 372.40H704.24A2.1 2.1 0 0 0 708.44 372.40H710.46A2.1 2.1 0 0 0 714.66 372.40H716.68A2.1 2.1 0 0 0 720.88 372.40H722.91A2.1 2.1 0 0 0 727.11 372.40H729.13A2.1 2.1 0 0 0 733.33 372.40H735.35A2.1 2.1 0 0 0 739.55 372.40H741.57A2.1 2.1 0 0 0 745.77 372.40H747.79A2.1 2.1 0 0 0 751.99 372.40H753.00V373.25A2.1 2.1 0 0 0 753.00 377.45V379.16A2.1 2.1 0 0 0 753.00 383.37V385.07A2.1 2.1 0 0 0 753.00 389.27V390.98A2.1 2.1 0 0 0 753.00 395.19V396.89A2.1 2.1 0 0 0 753.00 401.10V402.80A2.1 2.1 0 0 0 753.00 407.00V408.71A2.1 2.1 0 0 0 753.00 412.92V414.62A2.1 2.1 0 0 0 753.00 418.83V420.53A2.1 2.1 0 0 0 753.00 424.74V426.44A2.1 2.1 0 0 0 753.00 430.65V431.50H751.99A2.1 2.1 0 0 0 747.79 431.50H745.77A2.1 2.1 0 0 0 741.57 431.50H739.55A2.1 2.1 0 0 0 735.35 431.50H733.33A2.1 2.1 0 0 0 729.13 431.50H727.11A2.1 2.1 0 0 0 722.91 431.50H720.88A2.1 2.1 0 0 0 716.68 431.50H714.66A2.1 2.1 0 0 0 710.46 431.50H708.44A2.1 2.1 0 0 0 704.24 431.50H702.22A2.1 2.1 0 0 0 698.02 431.50H696.00A2.1 2.1 0 0 0 691.80 431.50H689.78A2.1 2.1 0 0 0 685.58 431.50H683.56A2.1 2.1 0 0 0 679.36 431.50H677.34A2.1 2.1 0 0 0 673.14 431.50H671.12A2.1 2.1 0 0 0 666.92 431.50H664.89A2.1 2.1 0 0 0 660.69 431.50H658.67A2.1 2.1 0 0 0 654.47 431.50H652.45A2.1 2.1 0 0 0 648.25 431.50H646.23A2.1 2.1 0 0 0 642.03 431.50H640.01A2.1 2.1 0 0 0 635.81 431.50H634.80V430.65A2.1 2.1 0 0 0 634.80 426.44V424.74A2.1 2.1 0 0 0 634.80 420.53V418.83A2.1 2.1 0 0 0 634.80 414.62V412.92A2.1 2.1 0 0 0 634.80 408.71V407.00A2.1 2.1 0 0 0 634.80 402.80V401.10A2.1 2.1 0 0 0 634.80 396.89V395.19A2.1 2.1 0 0 0 634.80 390.98V389.27A2.1 2.1 0 0 0 634.80 385.07V383.37A2.1 2.1 0 0 0 634.80 379.16V377.45A2.1 2.1 0 0 0 634.80 373.25Z" fill="#bfc5cd" opacity="0.85" filter="url(#bl)"/><path d="M634.80 370.90H635.81A2.1 2.1 0 0 0 640.01 370.90H642.03A2.1 2.1 0 0 0 646.23 370.90H648.25A2.1 2.1 0 0 0 652.45 370.90H654.47A2.1 2.1 0 0 0 658.67 370.90H660.69A2.1 2.1 0 0 0 664.89 370.90H666.92A2.1 2.1 0 0 0 671.12 370.90H673.14A2.1 2.1 0 0 0 677.34 370.90H679.36A2.1 2.1 0 0 0 683.56 370.90H685.58A2.1 2.1 0 0 0 689.78 370.90H691.80A2.1 2.1 0 0 0 696.00 370.90H698.02A2.1 2.1 0 0 0 702.22 370.90H704.24A2.1 2.1 0 0 0 708.44 370.90H710.46A2.1 2.1 0 0 0 714.66 370.90H716.68A2.1 2.1 0 0 0 720.88 370.90H722.91A2.1 2.1 0 0 0 727.11 370.90H729.13A2.1 2.1 0 0 0 733.33 370.90H735.35A2.1 2.1 0 0 0 739.55 370.90H741.57A2.1 2.1 0 0 0 745.77 370.90H747.79A2.1 2.1 0 0 0 751.99 370.90H753.00V371.75A2.1 2.1 0 0 0 753.00 375.95V377.66A2.1 2.1 0 0 0 753.00 381.87V383.57A2.1 2.1 0 0 0 753.00 387.77V389.48A2.1 2.1 0 0 0 753.00 393.69V395.39A2.1 2.1 0 0 0 753.00 399.60V401.30A2.1 2.1 0 0 0 753.00 405.50V407.21A2.1 2.1 0 0 0 753.00 411.42V413.12A2.1 2.1 0 0 0 753.00 417.33V419.03A2.1 2.1 0 0 0 753.00 423.24V424.94A2.1 2.1 0 0 0 753.00 429.15V430.00H751.99A2.1 2.1 0 0 0 747.79 430.00H745.77A2.1 2.1 0 0 0 741.57 430.00H739.55A2.1 2.1 0 0 0 735.35 430.00H733.33A2.1 2.1 0 0 0 729.13 430.00H727.11A2.1 2.1 0 0 0 722.91 430.00H720.88A2.1 2.1 0 0 0 716.68 430.00H714.66A2.1 2.1 0 0 0 710.46 430.00H708.44A2.1 2.1 0 0 0 704.24 430.00H702.22A2.1 2.1 0 0 0 698.02 430.00H696.00A2.1 2.1 0 0 0 691.80 430.00H689.78A2.1 2.1 0 0 0 685.58 430.00H683.56A2.1 2.1 0 0 0 679.36 430.00H677.34A2.1 2.1 0 0 0 673.14 430.00H671.12A2.1 2.1 0 0 0 666.92 430.00H664.89A2.1 2.1 0 0 0 660.69 430.00H658.67A2.1 2.1 0 0 0 654.47 430.00H652.45A2.1 2.1 0 0 0 648.25 430.00H646.23A2.1 2.1 0 0 0 642.03 430.00H640.01A2.1 2.1 0 0 0 635.81 430.00H634.80V429.15A2.1 2.1 0 0 0 634.80 424.94V423.24A2.1 2.1 0 0 0 634.80 419.03V417.33A2.1 2.1 0 0 0 634.80 413.12V411.42A2.1 2.1 0 0 0 634.80 407.21V405.50A2.1 2.1 0 0 0 634.80 401.30V399.60A2.1 2.1 0 0 0 634.80 395.39V393.69A2.1 2.1 0 0 0 634.80 389.48V387.77A2.1 2.1 0 0 0 634.80 383.57V381.87A2.1 2.1 0 0 0 634.80 377.66V375.95A2.1 2.1 0 0 0 634.80 371.75Z" fill="#fff"/><svg x="641.8" y="376.9" width="104.4" height="47.1" viewBox="0 0 104.4 47.1"><rect width="105" height="48" fill="#5cab2a"/><path d="M6 36L36 22L40 24L12 39ZM14 41L50 24L54 26L22 44ZM58 27L88 15L90 17L63 30ZM80 31L99 23L100 25L83 33ZM44 28L62 21L70 24L52 33Z" fill="#4f9c24"/><path d="M26.3 17Q27.5 14.8 29.2 16L30 30.3L32.6 31L33 38.5H28.6L27.4 30Z" fill="#b5b5b3"/><path d="M26.3 17L25.4 21L27 30L27.4 22Z" fill="#9a9a98"/><path d="M39.4 11Q41 8.4 43.2 9.4L45.9 10.5L45.2 28.6L40 29.2Z" fill="#b9b9b7"/><path d="M43.6 10.5L46.6 8.4L47.6 12L46.2 13.5L45.6 26L43.2 27Z" fill="#a3a3a1"/><path d="M49.7 7.4L57.8 6.4L57.4 20.3L50.2 21Z" fill="#b8b8b6"/><path d="M52.6 9.2L54.8 9L54.6 20.4L52.8 20.6Z" fill="#868684"/><ellipse cx="63.8" cy="14.1" rx="2.3" ry="1.2" fill="#c6c6c4"/><path d="M62.6 18.6L65 17L66.4 22.6L63.4 23.6ZM66.6 17.6L69.4 17L70.2 24.6L67.8 25Z" fill="#b3b3b1"/><path d="M70.3 6.8L74.1 6.5L74 20.6L70.6 20.9Z" fill="#c9c9c7"/><ellipse cx="79.6" cy="10.4" rx="2.9" ry="3.4" fill="#b3b3b1"/><path d="M75.8 7.2L77.6 6.6L77.8 13L76 13.4Z" fill="#a3a3a1"/><path d="M78.6 13.7L81.5 13.5L81.2 26.6L78.9 27Z" fill="#b6b6b4"/><path d="M72.4 24Q74.4 22.4 76.2 23.6L76.9 35L72.6 35.4Z" fill="#c0c0be"/><path d="M72.4 24L71.6 28L72.6 35.4Z" fill="#9a9a98"/><path d="M94.8 16.6L96.4 13.8L98.2 16L97.6 31L94.9 31.4Z" fill="#b5b5b3"/><ellipse cx="93.4" cy="37.5" rx="5.4" ry="1.9" transform="rotate(-12 93.4 37.5)" fill="#c9c9c7"/><path d="M34.3 30.2Q46 29.8 54.5 32.6Q59.5 34.4 59.2 36.4L57.6 38Q52 35.4 45 34.6Q39 33.8 34.8 33.6Z" fill="#c4c4c2"/><path d="M34.9 33.4L38.7 33.8L39.2 48H35.6Z" fill="#a6a6a4"/><path d="M40.4 34.2L44.2 34.6L44.6 48H41Z" fill="#b4b4b2"/><path d="M47.2 35.2L51.4 35.8L51.6 48H47.6Z" fill="#9e9e9c"/><path d="M56.4 37.6L60.8 37L61.2 48H56.8Z" fill="#a9a9a7"/><path d="M64.3 36.2Q66.6 34.6 68.9 36L69.3 48H64.1Z" fill="#b9b9b7"/><path d="M73.3 35.6Q75.3 34 77.3 35.4L77.6 48H73.2Z" fill="#b3b3b1"/><text x="84.4" y="10.8" font-family="Liberation Sans, sans-serif" font-size="10" fill="#fff" textLength="16.8" lengthAdjust="spacingAndGlyphs">60c</text></svg></svg>
    <!--ST1-->
    <div id="bottombar"><svg class="abs" style="left:0;top:-1px" width="638" height="32" viewBox="169 420.3 638 32">
      <g fill="#c4c9d0">
        <path d="M192.6 432.1H198.4L201.3 435V441.2Q201.3 442 200.5 442H192.6Q191.8 442 191.8 441.2V432.9Q191.8 432.1 192.6 432.1Z"/>
        <path d="M230.2 437.2L241.4 432.1L238.6 442L235.6 439.4L233.8 441.6L233.6 438.6Z"/>
        <path d="M269 437Q272 432.7 275.2 432.7Q278.4 432.7 281.4 437Q278.4 441.2 275.2 441.2Q272 441.2 269 437Z"/>
        <path d="M309.7 434.2H311.8L312.6 432.7H315.6L316.4 434.2H318.5Q319.3 434.2 319.3 435V440.8Q319.3 441.6 318.5 441.6H309.7Q308.9 441.6 308.9 440.8V435Q308.9 434.2 309.7 434.2Z"/>
      </g>
      <path d="M196.55 435.3V439.6M194.9 438L196.55 439.8L198.2 438" fill="none" stroke="#eef1f5" stroke-width="1"/>
      <path d="M198.6 432.3V434.8H201.1" fill="none" stroke="#eef1f5" stroke-width="0.6"/>
      <path d="M240.6 432.8L233.9 438.4" stroke="#eef1f5" stroke-width="0.7"/>
      <circle cx="275.2" cy="436.9" r="2.3" fill="#eef1f5"/><circle cx="275.2" cy="436.9" r="1.2" fill="#c4c9d0"/>
      <circle cx="314.1" cy="437.8" r="2.3" fill="#eef1f5"/><circle cx="314.1" cy="437.8" r="1.2" fill="#c4c9d0"/>
      <rect x="722" y="437.6" width="61.3" height="1.5" rx="0.7" fill="#8a94a1"/>
      <circle cx="744.3" cy="438.3" r="4.1" fill="#fff" stroke="#c9ced6" stroke-width="0.6"/>
    </svg></div>
  </div>
  <div class="abs" style="left:0;top:0;width:801px;height:452px;border:1.9px solid #dce2ed;border-top:1px solid #d4d8e0;border-bottom:1px solid #d3d8e1;border-radius:1.5px 1.5px 5px 5px;pointer-events:none"></div>
</div>
</body>
</html>
